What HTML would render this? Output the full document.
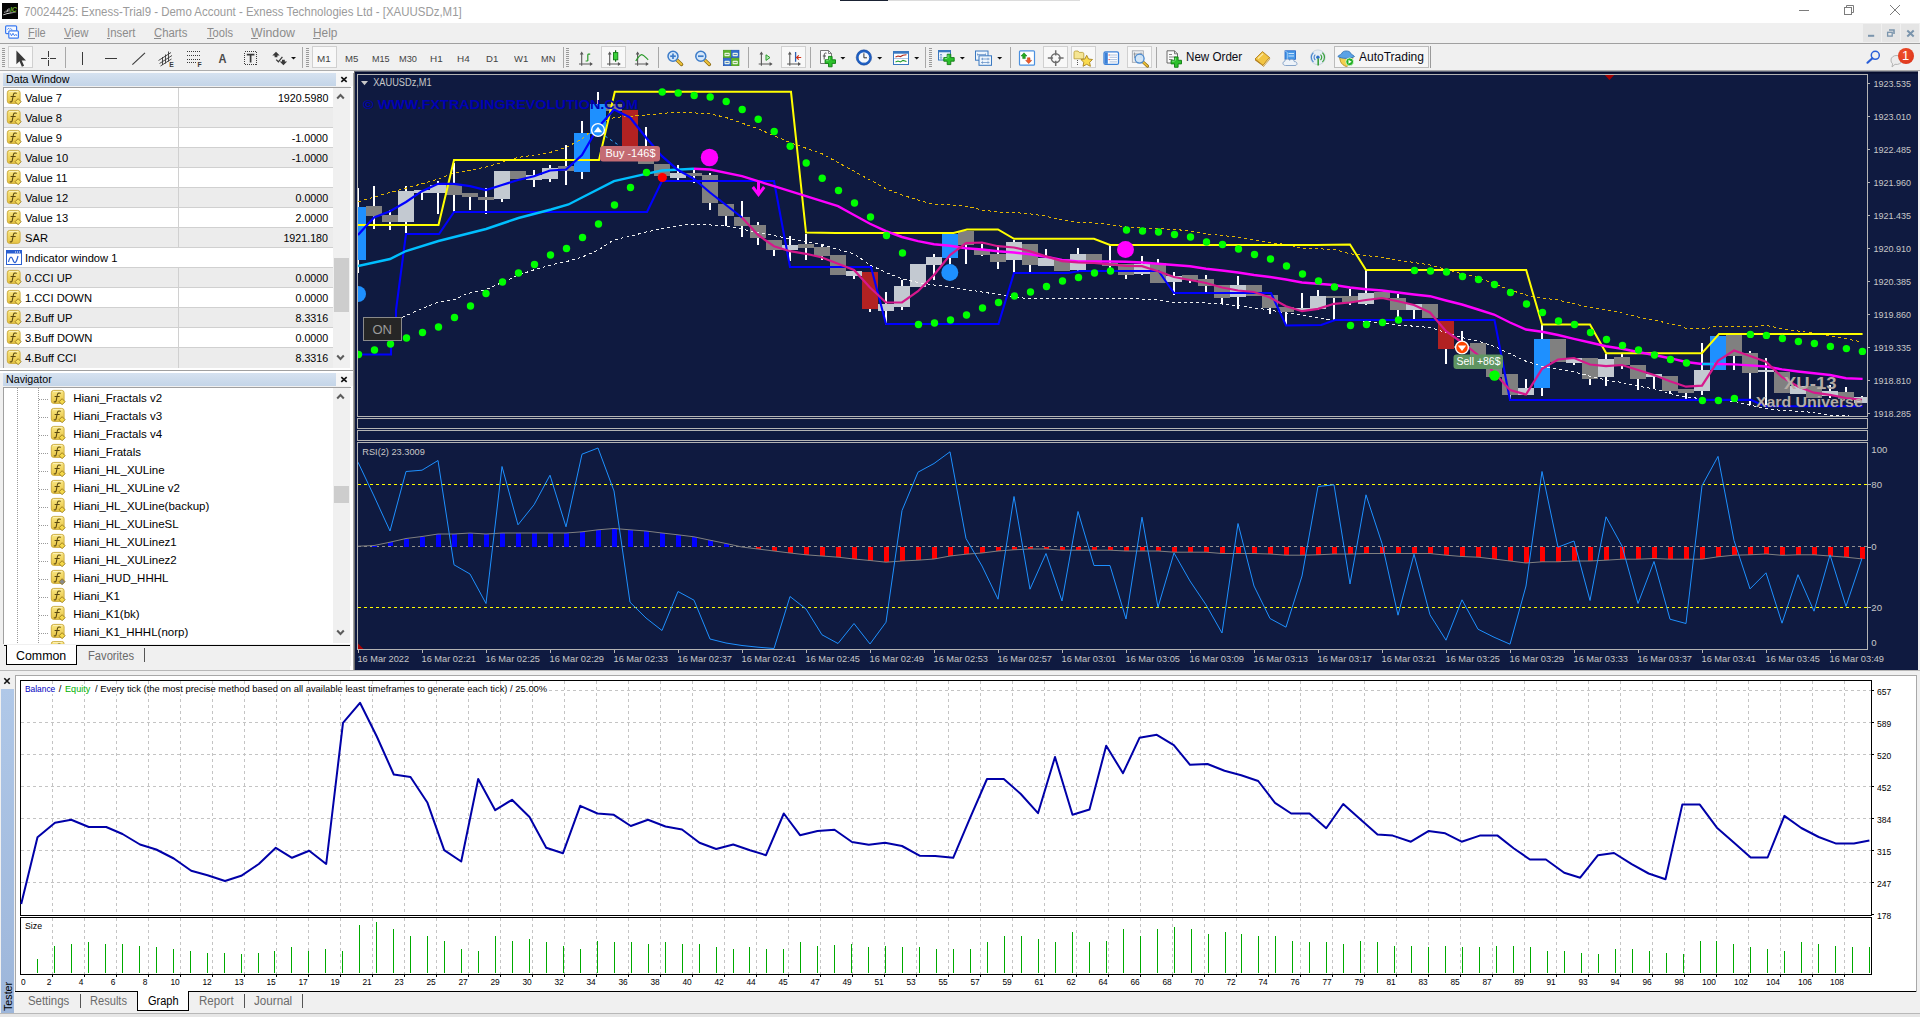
<!DOCTYPE html>
<html><head><meta charset="utf-8"><title>MetaTrader 4</title>
<style>
html,body{margin:0;padding:0;background:#f0f0f0;overflow:hidden}
body{width:1920px;height:1017px;position:relative;font-family:"Liberation Sans",sans-serif;font-size:12px}
#root{position:absolute;left:0;top:0;width:1920px;height:1017px;overflow:hidden;background:#f0f0f0}
svg{overflow:hidden;display:block}
</style></head><body><div id="root">
<div style="position:absolute;left:0px;top:0px;width:1920px;height:23px;background:#ffffff;"></div>
<div style="position:absolute;left:840px;top:0px;width:48px;height:1px;background:#1a2233;"></div>
<div style="position:absolute;left:888px;top:0px;width:192px;height:1px;background:#dcdcdc;"></div>
<svg style="position:absolute;left:2px;top:3px" width="16" height="16" viewBox="0 0 16 16"><rect width="16" height="16" fill="#050505"/><path d="M1.200 11.600C5 9.600 10 9.200 14.900 9.700C10 10 5.500 10.600 1.200 12.300Z" fill="#f2f2f2"/><path d="M2.800 9.800v-1.200M4.200 9.300v-1.800M5.600 8.900v-2.600M7 8.600v-3.400" stroke="#d8d8d8" stroke-width=".9"/><text x="7.900" y="8.600" font-family="Liberation Sans,sans-serif" font-size="6.600" font-weight="bold" font-style="italic" fill="#6fae2e" textLength="7" lengthAdjust="spacingAndGlyphs">IC</text></svg>
<div style="position:absolute;top:3.8px;height:17px;line-height:17px;font-size:12px;color:#9b9b9b;white-space:pre;left:24.0px;transform-origin:0 50%;transform:scaleX(0.9552);">70024425: Exness-Trial9 - Demo Account - Exness Technologies Ltd - [XAUUSDz,M1]</div>
<svg style="position:absolute;left:1780px;top:0" width="140" height="23" viewBox="1780 0 140 23" fill="none" stroke="#7c7c7c" stroke-width="1"><path d="M1799 10.500H1809"/><rect x="1844.500" y="7.500" width="7" height="7"/><path d="M1846.500 7.500V5.500H1853.500V12.500H1851.500"/><path d="M1890 5L1900 15M1900 5L1890 15"/></svg>
<div style="position:absolute;left:0px;top:23px;width:1920px;height:21px;background:#f0f0f0;"></div>
<div style="position:absolute;left:0px;top:43px;width:1920px;height:1px;background:#a0a0a0;"></div>
<svg style="position:absolute;left:4px;top:24px" width="16" height="16" viewBox="4 24 16 16" fill="none" stroke="#3a7af0" stroke-width="1.200"><rect x="5.600" y="25.800" width="11" height="7.800" rx="1" fill="#f4f8ff"/><path d="M7.500 29.500L8.600 28.300L9.800 29.500M10.500 28.300L12 29.800" stroke-width="1"/><rect x="8.800" y="30.800" width="9.600" height="7.400" rx="1" fill="#ffffff"/><path d="M10.300 33.300L11.500 35.800L13 33.300L14.500 35.800L16 34.300L16.800 35.800" stroke-width="1"/></svg>
<div style="position:absolute;top:23.5px;height:18px;line-height:18px;font-size:12.5px;color:#8c8c8c;white-space:pre;left:28.3px;transform-origin:0 50%;transform:scaleX(0.8787);">File</div>
<div style="position:absolute;left:28px;top:38px;width:7px;height:1px;background:#8c8c8c;"></div>
<div style="position:absolute;top:23.5px;height:18px;line-height:18px;font-size:12.5px;color:#8c8c8c;white-space:pre;left:64.3px;transform-origin:0 50%;transform:scaleX(0.9081);">View</div>
<div style="position:absolute;left:64px;top:38px;width:7px;height:1px;background:#8c8c8c;"></div>
<div style="position:absolute;top:23.5px;height:18px;line-height:18px;font-size:12.5px;color:#8c8c8c;white-space:pre;left:107.3px;transform-origin:0 50%;transform:scaleX(0.9084);">Insert</div>
<div style="position:absolute;left:107px;top:38px;width:3px;height:1px;background:#8c8c8c;"></div>
<div style="position:absolute;top:23.5px;height:18px;line-height:18px;font-size:12.5px;color:#8c8c8c;white-space:pre;left:154.3px;transform-origin:0 50%;transform:scaleX(0.9072);">Charts</div>
<div style="position:absolute;left:154px;top:38px;width:7px;height:1px;background:#8c8c8c;"></div>
<div style="position:absolute;top:23.5px;height:18px;line-height:18px;font-size:12.5px;color:#8c8c8c;white-space:pre;left:206.7px;transform-origin:0 50%;transform:scaleX(0.8910);">Tools</div>
<div style="position:absolute;left:207px;top:38px;width:7px;height:1px;background:#8c8c8c;"></div>
<div style="position:absolute;top:23.5px;height:18px;line-height:18px;font-size:12.5px;color:#8c8c8c;white-space:pre;left:251.0px;transform-origin:0 50%;transform:scaleX(0.9897);">Window</div>
<div style="position:absolute;left:251px;top:38px;width:7px;height:1px;background:#8c8c8c;"></div>
<div style="position:absolute;top:23.5px;height:18px;line-height:18px;font-size:12.5px;color:#8c8c8c;white-space:pre;left:313.3px;transform-origin:0 50%;transform:scaleX(0.9491);">Help</div>
<div style="position:absolute;left:313px;top:38px;width:7px;height:1px;background:#8c8c8c;"></div>
<div style="position:absolute;left:1863px;top:24px;width:18px;height:18px;background:#e5e5e5;"></div>
<div style="position:absolute;left:1882px;top:24px;width:18px;height:18px;background:#e5e5e5;"></div>
<div style="position:absolute;left:1901px;top:24px;width:18px;height:18px;background:#e5e5e5;"></div>
<svg style="position:absolute;left:1860px;top:23px" width="60" height="20" viewBox="1860 23 60 20" fill="none" stroke="#7a94ac"><path d="M1868 35.800H1874.200" stroke-width="2"/><path d="M1889 30H1894V34" stroke-width="1.600"/><rect x="1887.600" y="32.300" width="4.600" height="3.800" stroke-width="1.300"/><path d="M1907.300 30.600L1913.700 36.600M1913.700 30.600L1907.300 36.600" stroke-width="2"/></svg>
<div style="position:absolute;left:0px;top:44px;width:1920px;height:27px;background:#f0f0f0;"></div>
<div style="position:absolute;left:0px;top:70px;width:1920px;height:1px;background:#adadad;"></div>
<div style="position:absolute;left:0px;top:71px;width:1920px;height:1px;background:#f8f8f8;"></div>
<div style="position:absolute;left:2px;top:48px;width:3px;height:20px;background:repeating-linear-gradient(#9a9a9a 0 1px,transparent 1px 2px)"></div>
<div style="position:absolute;left:8px;top:46px;width:25px;height:22px;background:#f8f8f8;border:1px solid #d0d0d0;box-sizing:border-box;"></div>
<div style="position:absolute;left:65px;top:47px;width:1px;height:21px;background:#a8a8a8;"></div>
<div style="position:absolute;left:302px;top:47px;width:1px;height:21px;background:#a8a8a8;"></div>
<div style="position:absolute;left:306px;top:48px;width:3px;height:20px;background:repeating-linear-gradient(#9a9a9a 0 1px,transparent 1px 2px)"></div>
<div style="position:absolute;left:312px;top:46px;width:25px;height:22px;background:#f8f8f8;border:1px solid #d0d0d0;box-sizing:border-box;"></div>
<div style="position:absolute;top:52.0px;height:13px;line-height:13px;font-size:9.6px;color:#444444;white-space:pre;left:317.3px;transform-origin:0 50%;transform:scaleX(1.0273);">M1</div>
<div style="position:absolute;top:52.0px;height:13px;line-height:13px;font-size:9.6px;color:#444444;white-space:pre;left:345.0px;transform-origin:0 50%;">M5</div>
<div style="position:absolute;top:52.0px;height:13px;line-height:13px;font-size:9.6px;color:#444444;white-space:pre;left:371.7px;transform-origin:0 50%;transform:scaleX(0.9425);">M15</div>
<div style="position:absolute;top:52.0px;height:13px;line-height:13px;font-size:9.6px;color:#444444;white-space:pre;left:399.3px;transform-origin:0 50%;transform:scaleX(0.9639);">M30</div>
<div style="position:absolute;top:52.0px;height:13px;line-height:13px;font-size:9.6px;color:#444444;white-space:pre;left:430.0px;transform-origin:0 50%;transform:scaleX(1.0349);">H1</div>
<div style="position:absolute;top:52.0px;height:13px;line-height:13px;font-size:9.6px;color:#444444;white-space:pre;left:457.3px;transform-origin:0 50%;transform:scaleX(1.0349);">H4</div>
<div style="position:absolute;top:52.0px;height:13px;line-height:13px;font-size:9.6px;color:#444444;white-space:pre;left:486.0px;transform-origin:0 50%;">D1</div>
<div style="position:absolute;top:52.0px;height:13px;line-height:13px;font-size:9.6px;color:#444444;white-space:pre;left:514.0px;transform-origin:0 50%;transform:scaleX(0.9931);">W1</div>
<div style="position:absolute;top:52.0px;height:13px;line-height:13px;font-size:9.6px;color:#444444;white-space:pre;left:540.7px;transform-origin:0 50%;transform:scaleX(0.9578);">MN</div>
<div style="position:absolute;left:563px;top:47px;width:1px;height:21px;background:#a8a8a8;"></div>
<div style="position:absolute;left:566px;top:48px;width:3px;height:20px;background:repeating-linear-gradient(#9a9a9a 0 1px,transparent 1px 2px)"></div>
<div style="position:absolute;left:601px;top:46px;width:25px;height:22px;background:#f8f8f8;border:1px solid #d0d0d0;box-sizing:border-box;"></div>
<div style="position:absolute;left:658px;top:47px;width:1px;height:21px;background:#a8a8a8;"></div>
<div style="position:absolute;left:748px;top:47px;width:1px;height:21px;background:#a8a8a8;"></div>
<div style="position:absolute;left:781px;top:46px;width:25px;height:22px;background:#f8f8f8;border:1px solid #d0d0d0;box-sizing:border-box;"></div>
<div style="position:absolute;left:810px;top:47px;width:1px;height:21px;background:#a8a8a8;"></div>
<div style="position:absolute;left:925px;top:47px;width:1px;height:21px;background:#a8a8a8;"></div>
<div style="position:absolute;left:929px;top:48px;width:3px;height:20px;background:repeating-linear-gradient(#9a9a9a 0 1px,transparent 1px 2px)"></div>
<div style="position:absolute;left:1010px;top:47px;width:1px;height:21px;background:#a8a8a8;"></div>
<div style="position:absolute;left:1043px;top:46px;width:25px;height:22px;background:#f8f8f8;border:1px solid #d0d0d0;box-sizing:border-box;"></div>
<div style="position:absolute;left:1071px;top:46px;width:25px;height:22px;background:#f8f8f8;border:1px solid #d0d0d0;box-sizing:border-box;"></div>
<div style="position:absolute;left:1127px;top:46px;width:25px;height:22px;background:#f8f8f8;border:1px solid #d0d0d0;box-sizing:border-box;"></div>
<div style="position:absolute;left:1156px;top:47px;width:1px;height:21px;background:#a8a8a8;"></div>
<div style="position:absolute;top:49.2px;height:17px;line-height:17px;font-size:12.3px;color:#0a0a14;white-space:pre;left:1185.6px;transform-origin:0 50%;transform:scaleX(0.9451);">New Order</div>
<div style="position:absolute;left:1334px;top:46px;width:95px;height:22px;background:#f6f6f6;border:1px solid #bcbcbc;box-sizing:border-box;"></div>
<div style="position:absolute;left:1430px;top:46px;width:1px;height:22px;background:#9a9a9a;"></div>
<div style="position:absolute;top:49.2px;height:17px;line-height:17px;font-size:12.3px;color:#0a0a14;white-space:pre;left:1358.5px;transform-origin:0 50%;transform:scaleX(0.9767);">AutoTrading</div>
<svg style="position:absolute;left:0;top:44px" width="1920" height="28" viewBox="0 44 1920 28">
<path d="M16.400 50.600V64.300L19.500 61.300L21.900 66.700L24.100 65.700L21.700 60.400H26Z" fill="#3a3a3a"/>
<g shape-rendering="crispEdges" stroke="#3a3a3a" stroke-width="1" fill="none"><path d="M48.500 51V57M48.500 60V66M41 58.500H47M50 58.500H56M48.500 58V59"/><path d="M82.500 52V65"/><path d="M105 58.500H117"/></g>
<path d="M132.400 64.700L145 52.900" stroke="#3a3a3a" stroke-width="1.100"/>
<g stroke="#3a3a3a" stroke-width=".9" fill="none"><path d="M158.500 60.500L171 52.500M159.500 63.500L172 55.500M160.500 66L171.500 59M162.500 57V65M165.500 54.500V63.500M168.500 51.500V61.500"/></g><text x="169.300" y="66.700" font-family="Liberation Sans,sans-serif" font-size="6.800" font-weight="bold" fill="#3a3a3a">E</text>
<g shape-rendering="crispEdges" stroke="#3a3a3a" stroke-width="1" stroke-dasharray="1 1" fill="none"><path d="M187 51.500H201M187 55.500H201M187 59.500H201M187 62.500H196"/></g><text x="197.600" y="66.700" font-family="Liberation Sans,sans-serif" font-size="6.800" font-weight="bold" fill="#3a3a3a">F</text>
<text x="218.600" y="63" font-family="Liberation Sans,sans-serif" font-size="12.500" font-weight="bold" fill="#4a4a4a" textLength="8" lengthAdjust="spacingAndGlyphs">A</text>
<rect x="244.500" y="51.500" width="12" height="13" fill="none" stroke="#3a3a3a" stroke-dasharray="1 1" shape-rendering="crispEdges"/><path d="M246.800 54.700H254.400M250.600 54.700V62.500" stroke="#3a3a3a" stroke-width="1.700" fill="none"/>
<path d="M272.300 55.600L276 51.800L279.700 55.600H277.400V57.200H274.600V55.600Z M279.700 61.400L283.400 65.200L287.100 61.400H284.800V59.800H282V61.400Z" fill="#3a3a3a"/><path d="M276.200 59.600L278.400 61.800L282.400 56.800" stroke="#3a3a3a" stroke-width="1.300" fill="none"/>
<path d="M291.0 57h5l-2.500 2.600z" fill="#111"/>
<path d="M581.7 53.0V65.7M579.0 64.0H591.5" stroke="#585858" stroke-width="1.1" fill="none"/><path d="M579.8 54.6L581.7 51.6L583.6 54.6Z M589.9 62.1L592.9 64.0L589.9 65.9Z" fill="#585858"/>
<path d="M587.8 54.2V61M587.8 54.2H590.2M585.6 61H587.8" stroke="#2a9a2a" stroke-width="1.2" fill="none"/>
<path d="M609.7 53.0V65.7M607.0 64.0H619.5" stroke="#585858" stroke-width="1.1" fill="none"/><path d="M607.8 54.6L609.7 51.6L611.6 54.6Z M617.9 62.1L620.9 64.0L617.9 65.9Z" fill="#585858"/>
<path d="M615.6 50.2V61.8" stroke="#0e6a12" stroke-width="1.2"/><rect x="613.5" y="52.6" width="4.3" height="7.2" fill="#3ad03a" stroke="#0e7a12" stroke-width=".9"/>
<path d="M637.6 53.0V65.7M634.9 64.0H647.4" stroke="#585858" stroke-width="1.1" fill="none"/><path d="M635.7 54.6L637.6 51.6L639.5 54.6Z M645.8 62.1L648.8 64.0L645.8 65.9Z" fill="#585858"/>
<path d="M635.8 61C638 57.500 640 54.500 641.800 54.700C644 55 646 58 648.200 59.700" stroke="#2a9a2a" stroke-width="1.2" fill="none"/>
<path d="M676.4 59.6L681.6 64.4" stroke="#8a6a10" stroke-width="3.4" stroke-linecap="round"/><path d="M676.6 59.8L681.4 64.2" stroke="#eec23a" stroke-width="2" stroke-linecap="round"/><circle cx="673" cy="56.2" r="5" fill="#d6e8fa" stroke="#3d7cc9" stroke-width="1.5"/><path d="M670.2 56.2H675.8" stroke="#3d7cc9" stroke-width="1.7"/><path d="M673 53.4V59.0" stroke="#3d7cc9" stroke-width="1.7"/>
<path d="M704.2 59.6L709.4 64.4" stroke="#8a6a10" stroke-width="3.4" stroke-linecap="round"/><path d="M704.4 59.8L709.2 64.2" stroke="#eec23a" stroke-width="2" stroke-linecap="round"/><circle cx="700.8" cy="56.2" r="5" fill="#d6e8fa" stroke="#3d7cc9" stroke-width="1.5"/><path d="M698.0 56.2H703.6" stroke="#3d7cc9" stroke-width="1.7"/>
<rect x="723.3" y="50.2" width="7.6" height="7.5" fill="#5ab42a" stroke="#3f9416" stroke-width=".6"/><rect x="724.5" y="52.8" width="5.2" height="3.4" rx=".8" fill="#e8f2e0"/><path d="M725.5 54.5h3.2" stroke="#3f9416" stroke-width=".7"/>
<rect x="731.4" y="50.2" width="7.6" height="7.5" fill="#2f6fd0" stroke="#1c4ca8" stroke-width=".6"/><rect x="732.6" y="52.8" width="5.2" height="3.4" rx=".8" fill="#e8f2e0"/><path d="M733.6 54.5h3.2" stroke="#1c4ca8" stroke-width=".7"/>
<rect x="723.3" y="58.2" width="7.6" height="7.5" fill="#2f6fd0" stroke="#1c4ca8" stroke-width=".6"/><rect x="724.5" y="60.8" width="5.2" height="3.4" rx=".8" fill="#e8f2e0"/><path d="M725.5 62.5h3.2" stroke="#1c4ca8" stroke-width=".7"/>
<rect x="731.4" y="58.2" width="7.6" height="7.5" fill="#5ab42a" stroke="#3f9416" stroke-width=".6"/><rect x="732.6" y="60.8" width="5.2" height="3.4" rx=".8" fill="#e8f2e0"/><path d="M733.6 62.5h3.2" stroke="#3f9416" stroke-width=".7"/>
<path d="M761.4 53.0V65.7M758.7 64.0H771.2" stroke="#585858" stroke-width="1.1" fill="none"/><path d="M759.5 54.6L761.4 51.6L763.3 54.6Z M769.6 62.1L772.6 64.0L769.6 65.9Z" fill="#585858"/>
<path d="M766 54.800L770 57.600L766 60.400Z" fill="#b8ecb8" stroke="#2a9a2a" stroke-width="1"/>
<path d="M789.8 53.0V65.7M787.1 64.0H799.6" stroke="#585858" stroke-width="1.1" fill="none"/><path d="M787.9 54.6L789.8 51.6L791.7 54.6Z M798.0 62.1L801.0 64.0L798.0 65.9Z" fill="#585858"/>
<path d="M795.600 52V61.800" stroke="#2c5fb0" stroke-width="1.3"/><path d="M801.200 57.500H796.800M798.800 55.400L796.600 57.500L798.800 59.600" stroke="#d03018" stroke-width="1.2" fill="none"/>
<path d="M820.500 50.500H828.500L831.500 53.500V63.500H820.500Z" fill="#fafafa" stroke="#6a6a6a" stroke-width=".9"/><path d="M828.500 50.500V53.500H831.500" fill="none" stroke="#6a6a6a" stroke-width=".8"/><path d="M826.500 53.200C824.800 52.600 824.300 53.600 824.200 55V59.500M822.800 56H826" stroke="#444" stroke-width=".9" fill="none"/>
<path d="M828.5 56.4H832.1V59.8H835.5V63.4H832.1V66.8H828.5V63.4H825.1V59.8H828.5Z" fill="#2cc02c" stroke="#0e7a12" stroke-width=".9" stroke-linejoin="round"/><path d="M829.3 57.4V60.1M826.1 60.7H828.5" stroke="#8be88b" stroke-width=".9" fill="none"/>
<path d="M840.4 57h5l-2.500 2.600z" fill="#111"/>
<circle cx="863.9" cy="57.5" r="6.5" fill="#f4f8fc" stroke="#1c5ec4" stroke-width="2.4"/><circle cx="863.9" cy="57.5" r="7.7" fill="none" stroke="#123f8c" stroke-width=".5"/><path d="M863.900 53.300V57.800H867" stroke="#333" stroke-width="1" fill="none"/><path d="M863.900 51.600v1M863.900 62.400v1M858 57.500h1M868.800 57.500h1" stroke="#7a8aa0" stroke-width=".8"/>
<path d="M877.2 57h5l-2.500 2.600z" fill="#111"/>
<rect x="893.5" y="51.5" width="15" height="13" fill="#ffffff" stroke="#3a78c0" stroke-width="1"/><rect x="893.500" y="51.500" width="15" height="2.200" fill="#3a78c0"/><path d="M894 58.500H908" stroke="#9ab8dc" stroke-width=".8"/><path d="M895.500 57L898 56L900.500 56.600L903 55.300L906.500 54.800" stroke="#b02818" stroke-width="1.1" fill="none"/><path d="M895.500 62L898 61L900.500 62L903 60.400L906.500 61.600" stroke="#1e9a2a" stroke-width="1.1" fill="none"/>
<path d="M914.2 57h5l-2.500 2.600z" fill="#111"/>
<rect x="938.500" y="50.500" width="12" height="9.500" fill="#eef5fc" stroke="#3a78c0" stroke-width="1"/><rect x="938.500" y="50.500" width="12" height="1.800" fill="#3a78c0"/><path d="M941 54V58.500M940 55.200L941 54L942 55.200M940 57.300L941 58.500L942 57.300" stroke="#5a88c0" stroke-width=".7" fill="none"/>
<path d="M947.2 54.2H950.8V57.6H954.2V61.2H950.8V64.6H947.2V61.2H943.8V57.6H947.2Z" fill="#2cc02c" stroke="#0e7a12" stroke-width=".9" stroke-linejoin="round"/><path d="M948.0 55.2V57.9M944.8 58.5H947.2" stroke="#8be88b" stroke-width=".9" fill="none"/>
<path d="M959.9 57h5l-2.500 2.600z" fill="#111"/>
<rect x="975.500" y="51" width="12.500" height="9.200" fill="#eef5fc" stroke="#3a78c0" stroke-width="1"/><path d="M977.500 54.500H985.500M977.500 53.500V55.500M985.500 53.500V55.500" stroke="#6a94c8" stroke-width=".8" fill="none"/><rect x="979" y="55.800" width="12.500" height="9.500" fill="#eef5fc" stroke="#3a78c0" stroke-width="1"/><path d="M981 59H989.500M981 62.500H989.500M982.500 57.800V60.200M988 57.800V60.200M982.500 61.300V63.700M988 61.300V63.700" stroke="#6a94c8" stroke-width=".8" fill="none"/>
<path d="M997.2 57h5l-2.500 2.600z" fill="#111"/>
<rect x="1019.500" y="50.800" width="15" height="14.400" rx="1" fill="#ffffff" stroke="#4a90e0" stroke-width="1.2"/><path d="M1024 52.800L1027 56H1025.300V58.600H1022.700V56H1021Z" fill="#22aa22" stroke="#0e7a12" stroke-width=".5"/><path d="M1028.700 63.600L1025.700 60.400H1027.400V57.800H1030V60.400H1031.700Z" fill="#f05a28" stroke="#b03010" stroke-width=".5"/>
<circle cx="1055.7" cy="58.1" r="4.4" fill="none" stroke="#6e6e6e" stroke-width="1.5"/><path d="M1055.700 50.200V55.500M1055.700 60.700V66M1047.800 58.100H1053.100M1058.300 58.100H1063.600" stroke="#6e6e6e" stroke-width="1.5"/>
<path d="M1074 52.500C1074 51.600 1074.600 51 1075.500 51H1078L1079.200 52.400H1082.500C1083.300 52.400 1083.800 53 1083.800 53.800V58.800H1074Z" fill="#f5e594" stroke="#b89a30" stroke-width=".8"/><path d="M1077.500 60V66" stroke="#555" stroke-width="1" stroke-dasharray="1 1"/>
<path d="M1086.700 55.300L1088.500 59L1092.500 59.500L1089.600 62.300L1090.400 66.300L1086.700 64.300L1083 66.300L1083.800 62.300L1080.900 59.500L1084.900 59Z" fill="#fadb4e" stroke="#a8821a" stroke-width=".9" stroke-linejoin="round"/>
<rect x="1104" y="51.800" width="14.500" height="12.600" rx="1.500" fill="#ffffff" stroke="#3a80d8" stroke-width="1.300"/><rect x="1104.600" y="52.400" width="3.200" height="11.400" fill="#3a80d8"/><path d="M1109.500 55H1117M1109.500 57.300H1117M1109.500 59.600H1117M1109.500 61.900H1117" stroke="#8aa6d0" stroke-width=".7"/><path d="M1108.600 55h1M1108.600 59.600h1" stroke="#e02020" stroke-width="1"/>
<rect x="1132.300" y="50.800" width="11" height="11.500" fill="#eceef0" stroke="#9aa0a8" stroke-width=".8"/><path d="M1134.500 52.500V58M1141 52.500V58M1133.500 54H1142.500" stroke="#7a8088" stroke-width=".7"/>
<path d="M1143 62L1147.500 66.200" stroke="#8a6a10" stroke-width="3" stroke-linecap="round"/><path d="M1143.200 62.200L1147.300 66" stroke="#eec23a" stroke-width="1.700" stroke-linecap="round"/><circle cx="1139.600" cy="58.600" r="4.500" fill="#cfe4f8" fill-opacity=".85" stroke="#4a8ad0" stroke-width="1.300"/>
<path d="M1167 50.800H1174.500L1177.500 53.800V63H1167Z" fill="#fafafa" stroke="#5a5a5a" stroke-width=".9"/><path d="M1174.500 50.800V53.800H1177.500" fill="none" stroke="#5a5a5a" stroke-width=".8"/><path d="M1169 54.500H1172M1169 57H1175.500M1169 59.500H1172.500" stroke="#777" stroke-width=".9"/>
<path d="M1174.5 56.9H1178.1V60.3H1181.5V63.9H1178.1V67.3H1174.5V63.9H1171.1V60.3H1174.5Z" fill="#2cc02c" stroke="#0e7a12" stroke-width=".9" stroke-linejoin="round"/><path d="M1175.3 57.9V60.6M1172.1 61.2H1174.5" stroke="#8be88b" stroke-width=".9" fill="none"/>
<path d="M1255 59L1262.500 51.600L1269.500 57.500L1263 65.400Z" fill="#f2c544" stroke="#a87410" stroke-width=".8" stroke-linejoin="round"/><path d="M1255 59L1263 65.400L1263.600 66.600L1255.200 60.600Z" fill="#b07810"/><path d="M1263 65.400L1269.500 57.500L1269.800 59L1263.600 66.600Z" fill="#f7e3a8" stroke="#a87410" stroke-width=".5"/><path d="M1258 58.500L1263 53.800" stroke="#fbe9a8" stroke-width="1.200"/>
<rect x="1285" y="50.800" width="10.500" height="8.500" fill="#4a9ae8" stroke="#1c5ec4" stroke-width=".8"/><path d="M1288.500 53.500H1294M1288.500 56H1294" stroke="#d8ecff" stroke-width=".9"/><path d="M1285 51L1287.500 52.500V59" stroke="#9cc8f4" stroke-width=".8" fill="none"/><path d="M1285.500 65.500C1282.500 65.500 1282 61.800 1284.800 61.200C1285 58.800 1288.500 58.300 1289.500 60.300C1291 58.600 1294.200 59.300 1294.300 61.600C1297.400 61.200 1298 65.500 1295 65.500Z" fill="#eef3f9" stroke="#7c9cc4" stroke-width=".9"/>
<circle cx="1317.900" cy="57.300" r="7.400" fill="#e6eef4" stroke="#b4c4d0" stroke-width=".6"/><path d="M1313.400 62A6.400 6.400 0 0 1 1313.400 52.600M1315.300 60A3.600 3.600 0 0 1 1315.300 54.600" stroke="#4a88d0" stroke-width="1.200" fill="none"/><path d="M1322.400 52.600A6.400 6.400 0 0 1 1322.400 62M1320.500 54.600A3.600 3.600 0 0 1 1320.500 60" stroke="#3aa03a" stroke-width="1.200" fill="none"/><circle cx="1317.900" cy="57.300" r="1.700" fill="#2c6fc8"/><path d="M1318.200 58.500V65.500" stroke="#3aa03a" stroke-width="1.600"/>
<path d="M1339.500 57.500H1353L1351.500 62.500C1350 65 1347.500 66.200 1346.200 66.500C1344 65.800 1341.500 64 1340.500 61.500Z" fill="#f2cf4e" stroke="#a88418" stroke-width=".8"/><path d="M1337.800 56.500C1339.500 54.500 1341.500 54.800 1342 53C1342.800 50.300 1349.800 50.300 1350.500 53C1351 54.800 1353.200 54.500 1354.500 56.500C1351 59 1341.500 59 1337.800 56.500Z" fill="#5aa2e6" stroke="#2c6fb3" stroke-width=".8"/><circle cx="1349.700" cy="61.800" r="3.900" fill="#22b022" stroke="#eaffea" stroke-width=".8"/><path d="M1348.500 59.800L1351.700 61.800L1348.500 63.800Z" fill="#fff"/>
</svg>
<svg style="position:absolute;left:1862.5px;top:48.0px" width="20" height="20" viewBox="0 0 20 20"><circle cx="12.3" cy="7.3" r="4" fill="none" stroke="#2a5fd8" stroke-width="1.5"/><path d="M9.4 10.2L4.5 14.7" stroke="#2a5fd8" stroke-width="2.2" stroke-linecap="round"/></svg>
<svg style="position:absolute;left:1889.0px;top:51.0px" width="20" height="20" viewBox="0 0 20 20"><path d="M2 9a5.5 4.5 0 1 1 4 4.3L3 16l.6-3.2A4.4 4.4 0 0 1 2 9z" fill="#ececec" stroke="#b4b4b4"/></svg>
<div style="position:absolute;left:1897.5px;top:47.5px;width:16px;height:16px;border-radius:8px;background:radial-gradient(circle at 40% 35%,#f0502a,#d8301a);color:#fff;font-size:13px;line-height:16px;text-align:center;">1</div>
<svg width="0" height="0" style="position:absolute"><defs><linearGradient id="fg" x1="0" y1="0" x2="0" y2="1"><stop offset="0" stop-color="#f9e681"/><stop offset="1" stop-color="#e6c341"/></linearGradient></defs></svg>
<div style="position:absolute;left:0px;top:71px;width:356px;height:600px;background:#f0f0f0;"></div>
<div style="position:absolute;left:350px;top:71px;width:3px;height:599px;background:#ffffff;"></div>
<div style="position:absolute;left:353px;top:71px;width:1px;height:599px;background:#a2a2a2;"></div>
<div style="position:absolute;left:354px;top:71px;width:1px;height:599px;background:#6e6e6e;"></div>
<div style="position:absolute;left:0px;top:71px;width:354px;height:2px;background:#fafafa;"></div>
<div style="position:absolute;left:3px;top:73px;width:333px;height:13px;background:linear-gradient(#d6e2f0,#c4d5e8);"></div>
<div style="position:absolute;left:336px;top:73px;width:17px;height:13px;background:#f6f6f6;"></div>
<div style="position:absolute;top:71.0px;height:16px;line-height:16px;font-size:11.5px;color:#000;white-space:pre;left:5.5px;transform-origin:0 50%;transform:scaleX(0.9287);">Data Window</div>
<svg style="position:absolute;left:340px;top:76px" width="8" height="7" viewBox="0 0 8 7"><path d="M1.300 1.200L6.700 5.800M6.700 1.200L1.300 5.800" stroke="#111" stroke-width="1.700"/></svg>
<div style="position:absolute;left:0px;top:368px;width:353px;height:5px;background:#ffffff;"></div>
<div style="position:absolute;left:0px;top:370px;width:353px;height:1px;background:#a0a0a0;"></div>
<div style="position:absolute;left:3px;top:87px;width:348px;height:281px;background:#ffffff;border:1px solid #a0a0a0;border-right:none;border-bottom:none;box-sizing:border-box;"></div>
<div style="position:absolute;left:4px;top:88px;width:329px;height:20px;background:#ffffff;"></div>
<div style="position:absolute;left:4px;top:107px;width:329px;height:1px;background:#d0d0d0;"></div>
<div style="position:absolute;left:178px;top:88px;width:1px;height:20px;background:#d0d0d0;"></div>
<svg style="position:absolute;left:6px;top:90px;overflow:visible" width="16" height="16" viewBox="0 0 16 16"><rect x="1.3" y=".4" width="12.8" height="13" rx="2.4" fill="url(#fg)" stroke="#c9a83a" stroke-width=".9"/><path d="M3 1.600h9.400" stroke="#fdf3c0" stroke-width=".9"/><path d="M10.300 3.300c-1.900-.9-2.700.1-3 1.900L6.200 10.600c-.3 1.300-1 1.700-2 1.200M5 6.400h4.300" stroke="#5a4810" stroke-width="1.050" fill="none" stroke-linecap="round"/><path d="M12.100 8.700l3 3-3 3-3-3z" fill="#f7df62" stroke="#8a6c14" stroke-width=".8"/></svg>
<div style="position:absolute;top:90.0px;height:16px;line-height:16px;font-size:11.5px;color:#000;white-space:pre;left:24.5px;transform-origin:0 50%;transform:scaleX(0.9704);">Value 7</div>
<div style="position:absolute;top:90.0px;height:16px;line-height:16px;font-size:11.5px;color:#000;white-space:pre;right:1592.0px;transform-origin:100% 50%;transform:scaleX(0.9287);">1920.5980</div>
<div style="position:absolute;left:4px;top:108px;width:329px;height:20px;background:#ececec;"></div>
<div style="position:absolute;left:4px;top:127px;width:329px;height:1px;background:#d0d0d0;"></div>
<div style="position:absolute;left:178px;top:108px;width:1px;height:20px;background:#d0d0d0;"></div>
<svg style="position:absolute;left:6px;top:110px;overflow:visible" width="16" height="16" viewBox="0 0 16 16"><rect x="1.3" y=".4" width="12.8" height="13" rx="2.4" fill="url(#fg)" stroke="#c9a83a" stroke-width=".9"/><path d="M3 1.600h9.400" stroke="#fdf3c0" stroke-width=".9"/><path d="M10.300 3.300c-1.900-.9-2.700.1-3 1.900L6.200 10.600c-.3 1.300-1 1.700-2 1.200M5 6.400h4.300" stroke="#5a4810" stroke-width="1.050" fill="none" stroke-linecap="round"/><path d="M12.100 8.700l3 3-3 3-3-3z" fill="#f7df62" stroke="#8a6c14" stroke-width=".8"/></svg>
<div style="position:absolute;top:110.0px;height:16px;line-height:16px;font-size:11.5px;color:#000;white-space:pre;left:24.5px;transform-origin:0 50%;transform:scaleX(0.9704);">Value 8</div>
<div style="position:absolute;left:4px;top:128px;width:329px;height:20px;background:#ffffff;"></div>
<div style="position:absolute;left:4px;top:147px;width:329px;height:1px;background:#d0d0d0;"></div>
<div style="position:absolute;left:178px;top:128px;width:1px;height:20px;background:#d0d0d0;"></div>
<svg style="position:absolute;left:6px;top:130px;overflow:visible" width="16" height="16" viewBox="0 0 16 16"><rect x="1.3" y=".4" width="12.8" height="13" rx="2.4" fill="url(#fg)" stroke="#c9a83a" stroke-width=".9"/><path d="M3 1.600h9.400" stroke="#fdf3c0" stroke-width=".9"/><path d="M10.300 3.300c-1.900-.9-2.700.1-3 1.900L6.200 10.600c-.3 1.300-1 1.700-2 1.200M5 6.400h4.300" stroke="#5a4810" stroke-width="1.050" fill="none" stroke-linecap="round"/><path d="M12.100 8.700l3 3-3 3-3-3z" fill="#f7df62" stroke="#8a6c14" stroke-width=".8"/></svg>
<div style="position:absolute;top:130.0px;height:16px;line-height:16px;font-size:11.5px;color:#000;white-space:pre;left:24.5px;transform-origin:0 50%;transform:scaleX(0.9704);">Value 9</div>
<div style="position:absolute;top:130.0px;height:16px;line-height:16px;font-size:11.5px;color:#000;white-space:pre;right:1592.0px;transform-origin:100% 50%;transform:scaleX(0.9287);">-1.0000</div>
<div style="position:absolute;left:4px;top:148px;width:329px;height:20px;background:#ececec;"></div>
<div style="position:absolute;left:4px;top:167px;width:329px;height:1px;background:#d0d0d0;"></div>
<div style="position:absolute;left:178px;top:148px;width:1px;height:20px;background:#d0d0d0;"></div>
<svg style="position:absolute;left:6px;top:150px;overflow:visible" width="16" height="16" viewBox="0 0 16 16"><rect x="1.3" y=".4" width="12.8" height="13" rx="2.4" fill="url(#fg)" stroke="#c9a83a" stroke-width=".9"/><path d="M3 1.600h9.400" stroke="#fdf3c0" stroke-width=".9"/><path d="M10.300 3.300c-1.900-.9-2.700.1-3 1.900L6.200 10.600c-.3 1.300-1 1.700-2 1.200M5 6.400h4.300" stroke="#5a4810" stroke-width="1.050" fill="none" stroke-linecap="round"/><path d="M12.100 8.700l3 3-3 3-3-3z" fill="#f7df62" stroke="#8a6c14" stroke-width=".8"/></svg>
<div style="position:absolute;top:150.0px;height:16px;line-height:16px;font-size:11.5px;color:#000;white-space:pre;left:24.5px;transform-origin:0 50%;transform:scaleX(0.9705);">Value 10</div>
<div style="position:absolute;top:150.0px;height:16px;line-height:16px;font-size:11.5px;color:#000;white-space:pre;right:1592.0px;transform-origin:100% 50%;transform:scaleX(0.9287);">-1.0000</div>
<div style="position:absolute;left:4px;top:168px;width:329px;height:20px;background:#ffffff;"></div>
<div style="position:absolute;left:4px;top:187px;width:329px;height:1px;background:#d0d0d0;"></div>
<div style="position:absolute;left:178px;top:168px;width:1px;height:20px;background:#d0d0d0;"></div>
<svg style="position:absolute;left:6px;top:170px;overflow:visible" width="16" height="16" viewBox="0 0 16 16"><rect x="1.3" y=".4" width="12.8" height="13" rx="2.4" fill="url(#fg)" stroke="#c9a83a" stroke-width=".9"/><path d="M3 1.600h9.400" stroke="#fdf3c0" stroke-width=".9"/><path d="M10.300 3.300c-1.900-.9-2.700.1-3 1.900L6.200 10.600c-.3 1.300-1 1.700-2 1.200M5 6.400h4.300" stroke="#5a4810" stroke-width="1.050" fill="none" stroke-linecap="round"/><path d="M12.100 8.700l3 3-3 3-3-3z" fill="#f7df62" stroke="#8a6c14" stroke-width=".8"/></svg>
<div style="position:absolute;top:170.0px;height:16px;line-height:16px;font-size:11.5px;color:#000;white-space:pre;left:24.5px;transform-origin:0 50%;transform:scaleX(0.9705);">Value 11</div>
<div style="position:absolute;left:4px;top:188px;width:329px;height:20px;background:#ececec;"></div>
<div style="position:absolute;left:4px;top:207px;width:329px;height:1px;background:#d0d0d0;"></div>
<div style="position:absolute;left:178px;top:188px;width:1px;height:20px;background:#d0d0d0;"></div>
<svg style="position:absolute;left:6px;top:190px;overflow:visible" width="16" height="16" viewBox="0 0 16 16"><rect x="1.3" y=".4" width="12.8" height="13" rx="2.4" fill="url(#fg)" stroke="#c9a83a" stroke-width=".9"/><path d="M3 1.600h9.400" stroke="#fdf3c0" stroke-width=".9"/><path d="M10.300 3.300c-1.900-.9-2.700.1-3 1.900L6.200 10.600c-.3 1.300-1 1.700-2 1.200M5 6.400h4.300" stroke="#5a4810" stroke-width="1.050" fill="none" stroke-linecap="round"/><path d="M12.100 8.700l3 3-3 3-3-3z" fill="#f7df62" stroke="#8a6c14" stroke-width=".8"/></svg>
<div style="position:absolute;top:190.0px;height:16px;line-height:16px;font-size:11.5px;color:#000;white-space:pre;left:24.5px;transform-origin:0 50%;transform:scaleX(0.9705);">Value 12</div>
<div style="position:absolute;top:190.0px;height:16px;line-height:16px;font-size:11.5px;color:#000;white-space:pre;right:1592.0px;transform-origin:100% 50%;transform:scaleX(0.9287);">0.0000</div>
<div style="position:absolute;left:4px;top:208px;width:329px;height:20px;background:#ffffff;"></div>
<div style="position:absolute;left:4px;top:227px;width:329px;height:1px;background:#d0d0d0;"></div>
<div style="position:absolute;left:178px;top:208px;width:1px;height:20px;background:#d0d0d0;"></div>
<svg style="position:absolute;left:6px;top:210px;overflow:visible" width="16" height="16" viewBox="0 0 16 16"><rect x="1.3" y=".4" width="12.8" height="13" rx="2.4" fill="url(#fg)" stroke="#c9a83a" stroke-width=".9"/><path d="M3 1.600h9.400" stroke="#fdf3c0" stroke-width=".9"/><path d="M10.300 3.300c-1.900-.9-2.700.1-3 1.900L6.200 10.600c-.3 1.300-1 1.700-2 1.200M5 6.400h4.300" stroke="#5a4810" stroke-width="1.050" fill="none" stroke-linecap="round"/><path d="M12.100 8.700l3 3-3 3-3-3z" fill="#f7df62" stroke="#8a6c14" stroke-width=".8"/></svg>
<div style="position:absolute;top:210.0px;height:16px;line-height:16px;font-size:11.5px;color:#000;white-space:pre;left:24.5px;transform-origin:0 50%;transform:scaleX(0.9705);">Value 13</div>
<div style="position:absolute;top:210.0px;height:16px;line-height:16px;font-size:11.5px;color:#000;white-space:pre;right:1592.0px;transform-origin:100% 50%;transform:scaleX(0.9287);">2.0000</div>
<div style="position:absolute;left:4px;top:228px;width:329px;height:20px;background:#ececec;"></div>
<div style="position:absolute;left:4px;top:247px;width:329px;height:1px;background:#d0d0d0;"></div>
<div style="position:absolute;left:178px;top:228px;width:1px;height:20px;background:#d0d0d0;"></div>
<svg style="position:absolute;left:6px;top:230px;overflow:visible" width="16" height="16" viewBox="0 0 16 16"><rect x="1.3" y=".4" width="12.8" height="13" rx="2.4" fill="url(#fg)" stroke="#c9a83a" stroke-width=".9"/><path d="M3 1.600h9.400" stroke="#fdf3c0" stroke-width=".9"/><path d="M10.300 3.300c-1.900-.9-2.700.1-3 1.900L6.200 10.600c-.3 1.300-1 1.700-2 1.200M5 6.400h4.300" stroke="#5a4810" stroke-width="1.050" fill="none" stroke-linecap="round"/></svg>
<div style="position:absolute;top:230.0px;height:16px;line-height:16px;font-size:11.5px;color:#000;white-space:pre;left:24.5px;transform-origin:0 50%;transform:scaleX(0.9704);">SAR</div>
<div style="position:absolute;top:230.0px;height:16px;line-height:16px;font-size:11.5px;color:#000;white-space:pre;right:1592.0px;transform-origin:100% 50%;transform:scaleX(0.9287);">1921.180</div>
<div style="position:absolute;left:4px;top:248px;width:329px;height:20px;background:#ffffff;"></div>
<div style="position:absolute;left:4px;top:267px;width:329px;height:1px;background:#d0d0d0;"></div>
<svg style="position:absolute;left:6px;top:250px" width="16" height="16" viewBox="0 0 16 16"><rect x=".5" y=".5" width="15" height="14" fill="#fff" stroke="#2a5fd0"/><rect x=".5" y=".5" width="15" height="3" fill="#2a5fd0"/><path d="M9 2h1M11 2h1M13 2h1" stroke="#fff"/><path d="M2.5 12c1.5-6 3-6 4.500-2s3 4 5-4" stroke="#2a5fd0" fill="none" stroke-width="1.2"/></svg>
<div style="position:absolute;top:250.0px;height:16px;line-height:16px;font-size:11.5px;color:#000;white-space:pre;left:24.5px;transform-origin:0 50%;transform:scaleX(0.9704);">Indicator window 1</div>
<div style="position:absolute;left:4px;top:268px;width:329px;height:20px;background:#ececec;"></div>
<div style="position:absolute;left:4px;top:287px;width:329px;height:1px;background:#d0d0d0;"></div>
<div style="position:absolute;left:178px;top:268px;width:1px;height:20px;background:#d0d0d0;"></div>
<svg style="position:absolute;left:6px;top:270px;overflow:visible" width="16" height="16" viewBox="0 0 16 16"><rect x="1.3" y=".4" width="12.8" height="13" rx="2.4" fill="url(#fg)" stroke="#c9a83a" stroke-width=".9"/><path d="M3 1.600h9.400" stroke="#fdf3c0" stroke-width=".9"/><path d="M10.300 3.300c-1.900-.9-2.700.1-3 1.900L6.200 10.600c-.3 1.300-1 1.700-2 1.200M5 6.400h4.300" stroke="#5a4810" stroke-width="1.050" fill="none" stroke-linecap="round"/><path d="M12.100 8.700l3 3-3 3-3-3z" fill="#f7df62" stroke="#8a6c14" stroke-width=".8"/></svg>
<div style="position:absolute;top:270.0px;height:16px;line-height:16px;font-size:11.5px;color:#000;white-space:pre;left:24.5px;transform-origin:0 50%;transform:scaleX(0.9704);">0.CCI UP</div>
<div style="position:absolute;top:270.0px;height:16px;line-height:16px;font-size:11.5px;color:#000;white-space:pre;right:1592.0px;transform-origin:100% 50%;transform:scaleX(0.9287);">0.0000</div>
<div style="position:absolute;left:4px;top:288px;width:329px;height:20px;background:#ffffff;"></div>
<div style="position:absolute;left:4px;top:307px;width:329px;height:1px;background:#d0d0d0;"></div>
<div style="position:absolute;left:178px;top:288px;width:1px;height:20px;background:#d0d0d0;"></div>
<svg style="position:absolute;left:6px;top:290px;overflow:visible" width="16" height="16" viewBox="0 0 16 16"><rect x="1.3" y=".4" width="12.8" height="13" rx="2.4" fill="url(#fg)" stroke="#c9a83a" stroke-width=".9"/><path d="M3 1.600h9.400" stroke="#fdf3c0" stroke-width=".9"/><path d="M10.300 3.300c-1.900-.9-2.700.1-3 1.900L6.200 10.600c-.3 1.300-1 1.700-2 1.200M5 6.400h4.300" stroke="#5a4810" stroke-width="1.050" fill="none" stroke-linecap="round"/><path d="M12.100 8.700l3 3-3 3-3-3z" fill="#f7df62" stroke="#8a6c14" stroke-width=".8"/></svg>
<div style="position:absolute;top:290.0px;height:16px;line-height:16px;font-size:11.5px;color:#000;white-space:pre;left:24.5px;transform-origin:0 50%;transform:scaleX(0.9704);">1.CCI DOWN</div>
<div style="position:absolute;top:290.0px;height:16px;line-height:16px;font-size:11.5px;color:#000;white-space:pre;right:1592.0px;transform-origin:100% 50%;transform:scaleX(0.9287);">0.0000</div>
<div style="position:absolute;left:4px;top:308px;width:329px;height:20px;background:#ececec;"></div>
<div style="position:absolute;left:4px;top:327px;width:329px;height:1px;background:#d0d0d0;"></div>
<div style="position:absolute;left:178px;top:308px;width:1px;height:20px;background:#d0d0d0;"></div>
<svg style="position:absolute;left:6px;top:310px;overflow:visible" width="16" height="16" viewBox="0 0 16 16"><rect x="1.3" y=".4" width="12.8" height="13" rx="2.4" fill="url(#fg)" stroke="#c9a83a" stroke-width=".9"/><path d="M3 1.600h9.400" stroke="#fdf3c0" stroke-width=".9"/><path d="M10.300 3.300c-1.900-.9-2.700.1-3 1.900L6.200 10.600c-.3 1.300-1 1.700-2 1.200M5 6.400h4.300" stroke="#5a4810" stroke-width="1.050" fill="none" stroke-linecap="round"/><path d="M12.100 8.700l3 3-3 3-3-3z" fill="#f7df62" stroke="#8a6c14" stroke-width=".8"/></svg>
<div style="position:absolute;top:310.0px;height:16px;line-height:16px;font-size:11.5px;color:#000;white-space:pre;left:24.5px;transform-origin:0 50%;transform:scaleX(0.9704);">2.Buff UP</div>
<div style="position:absolute;top:310.0px;height:16px;line-height:16px;font-size:11.5px;color:#000;white-space:pre;right:1592.0px;transform-origin:100% 50%;transform:scaleX(0.9287);">8.3316</div>
<div style="position:absolute;left:4px;top:328px;width:329px;height:20px;background:#ffffff;"></div>
<div style="position:absolute;left:4px;top:347px;width:329px;height:1px;background:#d0d0d0;"></div>
<div style="position:absolute;left:178px;top:328px;width:1px;height:20px;background:#d0d0d0;"></div>
<svg style="position:absolute;left:6px;top:330px;overflow:visible" width="16" height="16" viewBox="0 0 16 16"><rect x="1.3" y=".4" width="12.8" height="13" rx="2.4" fill="url(#fg)" stroke="#c9a83a" stroke-width=".9"/><path d="M3 1.600h9.400" stroke="#fdf3c0" stroke-width=".9"/><path d="M10.300 3.300c-1.900-.9-2.700.1-3 1.900L6.200 10.600c-.3 1.300-1 1.700-2 1.200M5 6.400h4.300" stroke="#5a4810" stroke-width="1.050" fill="none" stroke-linecap="round"/><path d="M12.100 8.700l3 3-3 3-3-3z" fill="#f7df62" stroke="#8a6c14" stroke-width=".8"/></svg>
<div style="position:absolute;top:330.0px;height:16px;line-height:16px;font-size:11.5px;color:#000;white-space:pre;left:24.5px;transform-origin:0 50%;transform:scaleX(0.9704);">3.Buff DOWN</div>
<div style="position:absolute;top:330.0px;height:16px;line-height:16px;font-size:11.5px;color:#000;white-space:pre;right:1592.0px;transform-origin:100% 50%;transform:scaleX(0.9287);">0.0000</div>
<div style="position:absolute;left:4px;top:348px;width:329px;height:20px;background:#ececec;"></div>
<div style="position:absolute;left:178px;top:348px;width:1px;height:20px;background:#d0d0d0;"></div>
<svg style="position:absolute;left:6px;top:350px;overflow:visible" width="16" height="16" viewBox="0 0 16 16"><rect x="1.3" y=".4" width="12.8" height="13" rx="2.4" fill="url(#fg)" stroke="#c9a83a" stroke-width=".9"/><path d="M3 1.600h9.400" stroke="#fdf3c0" stroke-width=".9"/><path d="M10.300 3.300c-1.900-.9-2.700.1-3 1.900L6.200 10.600c-.3 1.300-1 1.700-2 1.200M5 6.400h4.300" stroke="#5a4810" stroke-width="1.050" fill="none" stroke-linecap="round"/><path d="M12.100 8.700l3 3-3 3-3-3z" fill="#f7df62" stroke="#8a6c14" stroke-width=".8"/></svg>
<div style="position:absolute;top:350.0px;height:16px;line-height:16px;font-size:11.5px;color:#000;white-space:pre;left:24.5px;transform-origin:0 50%;transform:scaleX(0.9704);">4.Buff CCI</div>
<div style="position:absolute;top:350.0px;height:16px;line-height:16px;font-size:11.5px;color:#000;white-space:pre;right:1592.0px;transform-origin:100% 50%;transform:scaleX(0.9287);">8.3316</div>
<div style="position:absolute;left:333px;top:88px;width:17px;height:280px;background:#f0f0f0;"></div>
<div style="position:absolute;left:334px;top:258px;width:15px;height:54px;background:#cdcdcd;"></div>
<svg style="position:absolute;left:336px;top:93px" width="9" height="7" viewBox="0 0 9 7"><path d="M1.200 5.500L4.500 2L7.800 5.500" stroke="#5c5c5c" stroke-width="2" fill="none"/></svg><svg style="position:absolute;left:336px;top:354px" width="9" height="7" viewBox="0 0 9 7"><path d="M1.200 1.500L4.500 5L7.800 1.500" stroke="#5c5c5c" stroke-width="2" fill="none"/></svg>
<div style="position:absolute;left:3px;top:373px;width:333px;height:13px;background:linear-gradient(#d6e2f0,#c4d5e8);"></div>
<div style="position:absolute;left:336px;top:373px;width:17px;height:13px;background:#f6f6f6;"></div>
<div style="position:absolute;top:371.0px;height:16px;line-height:16px;font-size:11.5px;color:#000;white-space:pre;left:5.5px;transform-origin:0 50%;transform:scaleX(0.9287);">Navigator</div>
<svg style="position:absolute;left:340px;top:376px" width="8" height="7" viewBox="0 0 8 7"><path d="M1.300 1.200L6.700 5.800M6.700 1.200L1.300 5.800" stroke="#111" stroke-width="1.700"/></svg>
<div style="position:absolute;left:3px;top:387px;width:348px;height:257px;background:#ffffff;border:1px solid #a0a0a0;border-bottom:none;border-right:none;box-sizing:border-box;"></div>
<div style="position:absolute;left:17px;top:388px;width:1px;height:255px;background:repeating-linear-gradient(#9a9a9a 0 1px,transparent 1px 2px)"></div>
<div style="position:absolute;left:38px;top:388px;width:1px;height:255px;background:repeating-linear-gradient(#9a9a9a 0 1px,transparent 1px 2px)"></div>
<div style="position:absolute;left:39px;top:399px;width:10px;height:1px;background:repeating-linear-gradient(90deg,#9a9a9a 0 1px,transparent 1px 2px)"></div>
<svg style="position:absolute;left:50px;top:390px;overflow:visible" width="16" height="16" viewBox="0 0 16 16"><rect x="1.3" y=".4" width="12.8" height="13" rx="2.4" fill="url(#fg)" stroke="#c9a83a" stroke-width=".9"/><path d="M3 1.600h9.400" stroke="#fdf3c0" stroke-width=".9"/><path d="M10.300 3.300c-1.900-.9-2.700.1-3 1.900L6.200 10.600c-.3 1.300-1 1.700-2 1.200M5 6.400h4.300" stroke="#5a4810" stroke-width="1.050" fill="none" stroke-linecap="round"/><path d="M12.100 8.700l3 3-3 3-3-3z" fill="#f5d94a" stroke="#8a6c14" stroke-width=".8"/></svg>
<div style="position:absolute;top:390.0px;height:16px;line-height:16px;font-size:11.5px;color:#000;white-space:pre;left:73.2px;transform-origin:0 50%;">Hiani_Fractals v2</div>
<div style="position:absolute;left:39px;top:417px;width:10px;height:1px;background:repeating-linear-gradient(90deg,#9a9a9a 0 1px,transparent 1px 2px)"></div>
<svg style="position:absolute;left:50px;top:408px;overflow:visible" width="16" height="16" viewBox="0 0 16 16"><rect x="1.3" y=".4" width="12.8" height="13" rx="2.4" fill="url(#fg)" stroke="#c9a83a" stroke-width=".9"/><path d="M3 1.600h9.400" stroke="#fdf3c0" stroke-width=".9"/><path d="M10.300 3.300c-1.900-.9-2.700.1-3 1.900L6.200 10.600c-.3 1.300-1 1.700-2 1.200M5 6.400h4.300" stroke="#5a4810" stroke-width="1.050" fill="none" stroke-linecap="round"/><path d="M12.100 8.700l3 3-3 3-3-3z" fill="#f5d94a" stroke="#8a6c14" stroke-width=".8"/></svg>
<div style="position:absolute;top:408.0px;height:16px;line-height:16px;font-size:11.5px;color:#000;white-space:pre;left:73.2px;transform-origin:0 50%;">Hiani_Fractals v3</div>
<div style="position:absolute;left:39px;top:435px;width:10px;height:1px;background:repeating-linear-gradient(90deg,#9a9a9a 0 1px,transparent 1px 2px)"></div>
<svg style="position:absolute;left:50px;top:426px;overflow:visible" width="16" height="16" viewBox="0 0 16 16"><rect x="1.3" y=".4" width="12.8" height="13" rx="2.4" fill="url(#fg)" stroke="#c9a83a" stroke-width=".9"/><path d="M3 1.600h9.400" stroke="#fdf3c0" stroke-width=".9"/><path d="M10.300 3.300c-1.900-.9-2.700.1-3 1.900L6.200 10.600c-.3 1.300-1 1.700-2 1.200M5 6.400h4.300" stroke="#5a4810" stroke-width="1.050" fill="none" stroke-linecap="round"/><path d="M12.100 8.700l3 3-3 3-3-3z" fill="#f5d94a" stroke="#8a6c14" stroke-width=".8"/></svg>
<div style="position:absolute;top:426.0px;height:16px;line-height:16px;font-size:11.5px;color:#000;white-space:pre;left:73.2px;transform-origin:0 50%;">Hiani_Fractals v4</div>
<div style="position:absolute;left:39px;top:453px;width:10px;height:1px;background:repeating-linear-gradient(90deg,#9a9a9a 0 1px,transparent 1px 2px)"></div>
<svg style="position:absolute;left:50px;top:444px;overflow:visible" width="16" height="16" viewBox="0 0 16 16"><rect x="1.3" y=".4" width="12.8" height="13" rx="2.4" fill="url(#fg)" stroke="#c9a83a" stroke-width=".9"/><path d="M3 1.600h9.400" stroke="#fdf3c0" stroke-width=".9"/><path d="M10.300 3.300c-1.900-.9-2.700.1-3 1.900L6.200 10.600c-.3 1.300-1 1.700-2 1.200M5 6.400h4.300" stroke="#5a4810" stroke-width="1.050" fill="none" stroke-linecap="round"/><path d="M12.100 8.700l3 3-3 3-3-3z" fill="#f5d94a" stroke="#8a6c14" stroke-width=".8"/></svg>
<div style="position:absolute;top:444.0px;height:16px;line-height:16px;font-size:11.5px;color:#000;white-space:pre;left:73.2px;transform-origin:0 50%;">Hiani_Fratals</div>
<div style="position:absolute;left:39px;top:471px;width:10px;height:1px;background:repeating-linear-gradient(90deg,#9a9a9a 0 1px,transparent 1px 2px)"></div>
<svg style="position:absolute;left:50px;top:462px;overflow:visible" width="16" height="16" viewBox="0 0 16 16"><rect x="1.3" y=".4" width="12.8" height="13" rx="2.4" fill="url(#fg)" stroke="#c9a83a" stroke-width=".9"/><path d="M3 1.600h9.400" stroke="#fdf3c0" stroke-width=".9"/><path d="M10.300 3.300c-1.900-.9-2.700.1-3 1.900L6.200 10.600c-.3 1.300-1 1.700-2 1.200M5 6.400h4.300" stroke="#5a4810" stroke-width="1.050" fill="none" stroke-linecap="round"/><path d="M12.100 8.700l3 3-3 3-3-3z" fill="#f5d94a" stroke="#8a6c14" stroke-width=".8"/></svg>
<div style="position:absolute;top:462.0px;height:16px;line-height:16px;font-size:11.5px;color:#000;white-space:pre;left:73.2px;transform-origin:0 50%;">Hiani_HL_XULine</div>
<div style="position:absolute;left:39px;top:489px;width:10px;height:1px;background:repeating-linear-gradient(90deg,#9a9a9a 0 1px,transparent 1px 2px)"></div>
<svg style="position:absolute;left:50px;top:480px;overflow:visible" width="16" height="16" viewBox="0 0 16 16"><rect x="1.3" y=".4" width="12.8" height="13" rx="2.4" fill="url(#fg)" stroke="#c9a83a" stroke-width=".9"/><path d="M3 1.600h9.400" stroke="#fdf3c0" stroke-width=".9"/><path d="M10.300 3.300c-1.900-.9-2.700.1-3 1.900L6.200 10.600c-.3 1.300-1 1.700-2 1.200M5 6.400h4.300" stroke="#5a4810" stroke-width="1.050" fill="none" stroke-linecap="round"/><path d="M12.100 8.700l3 3-3 3-3-3z" fill="#f5d94a" stroke="#8a6c14" stroke-width=".8"/></svg>
<div style="position:absolute;top:480.0px;height:16px;line-height:16px;font-size:11.5px;color:#000;white-space:pre;left:73.2px;transform-origin:0 50%;">Hiani_HL_XULine v2</div>
<div style="position:absolute;left:39px;top:507px;width:10px;height:1px;background:repeating-linear-gradient(90deg,#9a9a9a 0 1px,transparent 1px 2px)"></div>
<svg style="position:absolute;left:50px;top:498px;overflow:visible" width="16" height="16" viewBox="0 0 16 16"><rect x="1.3" y=".4" width="12.8" height="13" rx="2.4" fill="url(#fg)" stroke="#c9a83a" stroke-width=".9"/><path d="M3 1.600h9.400" stroke="#fdf3c0" stroke-width=".9"/><path d="M10.300 3.300c-1.900-.9-2.700.1-3 1.900L6.200 10.600c-.3 1.300-1 1.700-2 1.200M5 6.400h4.300" stroke="#5a4810" stroke-width="1.050" fill="none" stroke-linecap="round"/><path d="M12.100 8.700l3 3-3 3-3-3z" fill="#f5d94a" stroke="#8a6c14" stroke-width=".8"/></svg>
<div style="position:absolute;top:498.0px;height:16px;line-height:16px;font-size:11.5px;color:#000;white-space:pre;left:73.2px;transform-origin:0 50%;">Hiani_HL_XULine(backup)</div>
<div style="position:absolute;left:39px;top:525px;width:10px;height:1px;background:repeating-linear-gradient(90deg,#9a9a9a 0 1px,transparent 1px 2px)"></div>
<svg style="position:absolute;left:50px;top:516px;overflow:visible" width="16" height="16" viewBox="0 0 16 16"><rect x="1.3" y=".4" width="12.8" height="13" rx="2.4" fill="url(#fg)" stroke="#c9a83a" stroke-width=".9"/><path d="M3 1.600h9.400" stroke="#fdf3c0" stroke-width=".9"/><path d="M10.300 3.300c-1.900-.9-2.700.1-3 1.900L6.200 10.600c-.3 1.300-1 1.700-2 1.200M5 6.400h4.300" stroke="#5a4810" stroke-width="1.050" fill="none" stroke-linecap="round"/><path d="M12.100 8.700l3 3-3 3-3-3z" fill="#f5d94a" stroke="#8a6c14" stroke-width=".8"/></svg>
<div style="position:absolute;top:516.0px;height:16px;line-height:16px;font-size:11.5px;color:#000;white-space:pre;left:73.2px;transform-origin:0 50%;">Hiani_HL_XULineSL</div>
<div style="position:absolute;left:39px;top:543px;width:10px;height:1px;background:repeating-linear-gradient(90deg,#9a9a9a 0 1px,transparent 1px 2px)"></div>
<svg style="position:absolute;left:50px;top:534px;overflow:visible" width="16" height="16" viewBox="0 0 16 16"><rect x="1.3" y=".4" width="12.8" height="13" rx="2.4" fill="url(#fg)" stroke="#c9a83a" stroke-width=".9"/><path d="M3 1.600h9.400" stroke="#fdf3c0" stroke-width=".9"/><path d="M10.300 3.300c-1.900-.9-2.700.1-3 1.900L6.200 10.600c-.3 1.300-1 1.700-2 1.200M5 6.400h4.300" stroke="#5a4810" stroke-width="1.050" fill="none" stroke-linecap="round"/><path d="M12.100 8.700l3 3-3 3-3-3z" fill="#f5d94a" stroke="#8a6c14" stroke-width=".8"/></svg>
<div style="position:absolute;top:534.0px;height:16px;line-height:16px;font-size:11.5px;color:#000;white-space:pre;left:73.2px;transform-origin:0 50%;">Hiani_HL_XULinez1</div>
<div style="position:absolute;left:39px;top:561px;width:10px;height:1px;background:repeating-linear-gradient(90deg,#9a9a9a 0 1px,transparent 1px 2px)"></div>
<svg style="position:absolute;left:50px;top:552px;overflow:visible" width="16" height="16" viewBox="0 0 16 16"><rect x="1.3" y=".4" width="12.8" height="13" rx="2.4" fill="url(#fg)" stroke="#c9a83a" stroke-width=".9"/><path d="M3 1.600h9.400" stroke="#fdf3c0" stroke-width=".9"/><path d="M10.300 3.300c-1.900-.9-2.700.1-3 1.900L6.200 10.600c-.3 1.300-1 1.700-2 1.200M5 6.400h4.300" stroke="#5a4810" stroke-width="1.050" fill="none" stroke-linecap="round"/><path d="M12.100 8.700l3 3-3 3-3-3z" fill="#f5d94a" stroke="#8a6c14" stroke-width=".8"/></svg>
<div style="position:absolute;top:552.0px;height:16px;line-height:16px;font-size:11.5px;color:#000;white-space:pre;left:73.2px;transform-origin:0 50%;">Hiani_HL_XULinez2</div>
<div style="position:absolute;left:39px;top:579px;width:10px;height:1px;background:repeating-linear-gradient(90deg,#9a9a9a 0 1px,transparent 1px 2px)"></div>
<svg style="position:absolute;left:50px;top:570px;overflow:visible" width="16" height="16" viewBox="0 0 16 16"><rect x="1.3" y=".4" width="12.8" height="13" rx="2.4" fill="url(#fg)" stroke="#c9a83a" stroke-width=".9"/><path d="M3 1.600h9.400" stroke="#fdf3c0" stroke-width=".9"/><path d="M10.300 3.300c-1.900-.9-2.700.1-3 1.900L6.200 10.600c-.3 1.300-1 1.700-2 1.200M5 6.400h4.300" stroke="#5a4810" stroke-width="1.050" fill="none" stroke-linecap="round"/><path d="M12.100 8.700l3 3-3 3-3-3z" fill="#8a8a8a" stroke="#8a6c14" stroke-width=".8"/></svg>
<div style="position:absolute;top:570.0px;height:16px;line-height:16px;font-size:11.5px;color:#000;white-space:pre;left:73.2px;transform-origin:0 50%;">Hiani_HUD_HHHL</div>
<div style="position:absolute;left:39px;top:597px;width:10px;height:1px;background:repeating-linear-gradient(90deg,#9a9a9a 0 1px,transparent 1px 2px)"></div>
<svg style="position:absolute;left:50px;top:588px;overflow:visible" width="16" height="16" viewBox="0 0 16 16"><rect x="1.3" y=".4" width="12.8" height="13" rx="2.4" fill="url(#fg)" stroke="#c9a83a" stroke-width=".9"/><path d="M3 1.600h9.400" stroke="#fdf3c0" stroke-width=".9"/><path d="M10.300 3.300c-1.900-.9-2.700.1-3 1.900L6.200 10.600c-.3 1.300-1 1.700-2 1.200M5 6.400h4.300" stroke="#5a4810" stroke-width="1.050" fill="none" stroke-linecap="round"/><path d="M12.100 8.700l3 3-3 3-3-3z" fill="#f5d94a" stroke="#8a6c14" stroke-width=".8"/></svg>
<div style="position:absolute;top:588.0px;height:16px;line-height:16px;font-size:11.5px;color:#000;white-space:pre;left:73.2px;transform-origin:0 50%;">Hiani_K1</div>
<div style="position:absolute;left:39px;top:615px;width:10px;height:1px;background:repeating-linear-gradient(90deg,#9a9a9a 0 1px,transparent 1px 2px)"></div>
<svg style="position:absolute;left:50px;top:606px;overflow:visible" width="16" height="16" viewBox="0 0 16 16"><rect x="1.3" y=".4" width="12.8" height="13" rx="2.4" fill="url(#fg)" stroke="#c9a83a" stroke-width=".9"/><path d="M3 1.600h9.400" stroke="#fdf3c0" stroke-width=".9"/><path d="M10.300 3.300c-1.900-.9-2.700.1-3 1.900L6.200 10.600c-.3 1.300-1 1.700-2 1.200M5 6.400h4.300" stroke="#5a4810" stroke-width="1.050" fill="none" stroke-linecap="round"/><path d="M12.100 8.700l3 3-3 3-3-3z" fill="#f5d94a" stroke="#8a6c14" stroke-width=".8"/></svg>
<div style="position:absolute;top:606.0px;height:16px;line-height:16px;font-size:11.5px;color:#000;white-space:pre;left:73.2px;transform-origin:0 50%;">Hiani_K1(bk)</div>
<div style="position:absolute;left:39px;top:633px;width:10px;height:1px;background:repeating-linear-gradient(90deg,#9a9a9a 0 1px,transparent 1px 2px)"></div>
<svg style="position:absolute;left:50px;top:624px;overflow:visible" width="16" height="16" viewBox="0 0 16 16"><rect x="1.3" y=".4" width="12.8" height="13" rx="2.4" fill="url(#fg)" stroke="#c9a83a" stroke-width=".9"/><path d="M3 1.600h9.400" stroke="#fdf3c0" stroke-width=".9"/><path d="M10.300 3.300c-1.900-.9-2.700.1-3 1.900L6.200 10.600c-.3 1.300-1 1.700-2 1.200M5 6.400h4.300" stroke="#5a4810" stroke-width="1.050" fill="none" stroke-linecap="round"/><path d="M12.100 8.700l3 3-3 3-3-3z" fill="#f5d94a" stroke="#8a6c14" stroke-width=".8"/></svg>
<div style="position:absolute;top:624.0px;height:16px;line-height:16px;font-size:11.5px;color:#000;white-space:pre;left:73.2px;transform-origin:0 50%;">Hiani_K1_HHHL(norp)</div>
<div style="position:absolute;left:50px;top:641px;width:16px;height:3px;overflow:hidden"><svg style="position:absolute;left:0;top:0;overflow:visible" width="16" height="16" viewBox="0 0 16 16"><rect x="1.3" y=".4" width="12.8" height="13" rx="2.4" fill="url(#fg)" stroke="#c9a83a" stroke-width=".9"/><path d="M3 1.600h9.400" stroke="#fdf3c0" stroke-width=".9"/><path d="M10.300 3.300c-1.900-.9-2.700.1-3 1.900L6.200 10.600c-.3 1.300-1 1.700-2 1.200M5 6.400h4.300" stroke="#5a4810" stroke-width="1.050" fill="none" stroke-linecap="round"/><path d="M12.100 8.700l3 3-3 3-3-3z" fill="#f7df62" stroke="#8a6c14" stroke-width=".8"/></svg></div>
<div style="position:absolute;left:333px;top:388px;width:17px;height:255px;background:#f0f0f0;"></div>
<div style="position:absolute;left:334px;top:486px;width:15px;height:17px;background:#cdcdcd;"></div>
<svg style="position:absolute;left:336px;top:393px" width="9" height="7" viewBox="0 0 9 7"><path d="M1.200 5.500L4.500 2L7.800 5.500" stroke="#5c5c5c" stroke-width="2" fill="none"/></svg><svg style="position:absolute;left:336px;top:629px" width="9" height="7" viewBox="0 0 9 7"><path d="M1.200 1.500L4.500 5L7.800 1.500" stroke="#5c5c5c" stroke-width="2" fill="none"/></svg>
<div style="position:absolute;left:3px;top:644px;width:348px;height:22px;background:#f0f0f0;"></div>
<div style="position:absolute;left:76px;top:645px;width:274px;height:1px;background:#000;"></div>
<div style="position:absolute;left:6px;top:645px;width:71px;height:20px;background:#ffffff;border:1px solid #000;border-top:none;box-sizing:border-box;"></div>
<div style="position:absolute;left:4px;top:645px;width:3px;height:1px;background:#000;"></div>
<div style="position:absolute;top:646.5px;height:18px;line-height:18px;font-size:12.5px;color:#000;white-space:pre;left:16.4px;transform-origin:0 50%;transform:scaleX(0.9899);">Common</div>
<div style="position:absolute;top:646.5px;height:18px;line-height:18px;font-size:12.5px;color:#6a6a6a;white-space:pre;left:87.5px;transform-origin:0 50%;transform:scaleX(0.8948);">Favorites</div>
<div style="position:absolute;left:144px;top:648px;width:1px;height:14px;background:#555;"></div>
<div style="position:absolute;left:355px;top:72px;width:1563px;height:598px;background:#0f1a40;"></div>
<div style="position:absolute;left:355px;top:71px;width:1563px;height:1px;background:#5c6274;"></div>
<div style="position:absolute;left:355px;top:72px;width:1563px;height:1px;background:#060d2e;"></div>
<div style="position:absolute;left:355px;top:73px;width:1563px;height:1px;background:#0a1335;"></div>
<div style="position:absolute;left:1918px;top:71px;width:2px;height:599px;background:#f0f0f0;"></div>
<div style="position:absolute;left:356px;top:670px;width:1564px;height:2px;background:#f0f0f0;"></div>
<svg style="position:absolute;left:0;top:0" width="1920" height="672" viewBox="0 0 1920 672">
<rect x="357.5" y="74.5" width="1510" height="342.0" fill="none" stroke="#b4b4b4" stroke-width="1" shape-rendering="crispEdges"/>
<rect x="357.5" y="418.5" width="1510" height="10.0" fill="none" stroke="#b4b4b4" stroke-width="1" shape-rendering="crispEdges"/>
<rect x="357.5" y="430.5" width="1510" height="10.0" fill="none" stroke="#b4b4b4" stroke-width="1" shape-rendering="crispEdges"/>
<rect x="357.5" y="442.5" width="1510" height="207.0" fill="none" stroke="#b4b4b4" stroke-width="1" shape-rendering="crispEdges"/>
<path d="M1868 83.5H1870" stroke="#b4b4b4" shape-rendering="crispEdges"/>
<path d="M1868 116.5H1870" stroke="#b4b4b4" shape-rendering="crispEdges"/>
<path d="M1868 149.5H1870" stroke="#b4b4b4" shape-rendering="crispEdges"/>
<path d="M1868 182.5H1870" stroke="#b4b4b4" shape-rendering="crispEdges"/>
<path d="M1868 215.5H1870" stroke="#b4b4b4" shape-rendering="crispEdges"/>
<path d="M1868 248.5H1870" stroke="#b4b4b4" shape-rendering="crispEdges"/>
<path d="M1868 281.5H1870" stroke="#b4b4b4" shape-rendering="crispEdges"/>
<path d="M1868 314.5H1870" stroke="#b4b4b4" shape-rendering="crispEdges"/>
<path d="M1868 347.5H1870" stroke="#b4b4b4" shape-rendering="crispEdges"/>
<path d="M1868 380.5H1870" stroke="#b4b4b4" shape-rendering="crispEdges"/>
<path d="M1868 413.5H1870" stroke="#b4b4b4" shape-rendering="crispEdges"/>
<defs><clipPath id="cm"><rect x="358" y="74" width="1509" height="342"/></clipPath><clipPath id="ci"><rect x="358" y="443" width="1509" height="206"/></clipPath></defs>
<g clip-path="url(#cm)">
<g shape-rendering="crispEdges"><rect x="357" y="187.5" width="2" height="85.0" fill="#ffffff"/><rect x="373" y="186.2" width="2" height="42.5" fill="#ffffff"/><rect x="389" y="210.0" width="2" height="20.0" fill="#ffffff"/><rect x="405" y="186.2" width="2" height="47.5" fill="#ffffff"/><rect x="421" y="189.5" width="2" height="10.5" fill="#ffffff"/><rect x="437" y="181.2" width="2" height="32.5" fill="#ffffff"/><rect x="453" y="162.5" width="2" height="50.0" fill="#ffffff"/><rect x="469" y="193.0" width="2" height="17.0" fill="#ffffff"/><rect x="485" y="187.5" width="2" height="26.2" fill="#ffffff"/><rect x="501" y="171.2" width="2" height="31.2" fill="#ffffff"/><rect x="517" y="171.2" width="2" height="7.5" fill="#ffffff"/><rect x="533" y="169.5" width="2" height="17.5" fill="#ffffff"/><rect x="549" y="165.0" width="2" height="17.0" fill="#ffffff"/><rect x="565" y="144.5" width="2" height="40.0" fill="#ffffff"/><rect x="581" y="121.2" width="2" height="57.5" fill="#ffffff"/><rect x="597" y="92.0" width="2" height="41.8" fill="#ffffff"/><rect x="613" y="103.8" width="2" height="7.5" fill="#ffffff"/><rect x="629" y="110.0" width="2" height="37.0" fill="#ffffff"/><rect x="645" y="127.0" width="2" height="36.8" fill="#ffffff"/><rect x="661" y="163.8" width="2" height="15.0" fill="#ffffff"/><rect x="677" y="165.0" width="2" height="15.0" fill="#ffffff"/><rect x="693" y="170.0" width="2" height="12.5" fill="#ffffff"/><rect x="709" y="172.5" width="2" height="37.5" fill="#ffffff"/><rect x="725" y="203.8" width="2" height="22.5" fill="#ffffff"/><rect x="741" y="201.2" width="2" height="36.2" fill="#ffffff"/><rect x="757" y="222.0" width="2" height="23.0" fill="#ffffff"/><rect x="773" y="240.0" width="2" height="16.2" fill="#ffffff"/><rect x="789" y="236.2" width="2" height="25.0" fill="#ffffff"/><rect x="805" y="233.8" width="2" height="26.2" fill="#ffffff"/><rect x="821" y="243.8" width="2" height="16.2" fill="#ffffff"/><rect x="837" y="255.0" width="2" height="19.5" fill="#ffffff"/><rect x="853" y="271.2" width="2" height="7.5" fill="#ffffff"/><rect x="869" y="272.0" width="2" height="40.0" fill="#ffffff"/><rect x="885" y="292.0" width="2" height="33.0" fill="#ffffff"/><rect x="901" y="280.0" width="2" height="30.0" fill="#ffffff"/><rect x="917" y="263.8" width="2" height="23.2" fill="#ffffff"/><rect x="933" y="253.8" width="2" height="26.2" fill="#ffffff"/><rect x="949" y="233.8" width="2" height="30.0" fill="#ffffff"/><rect x="965" y="231.2" width="2" height="32.5" fill="#ffffff"/><rect x="981" y="243.8" width="2" height="12.5" fill="#ffffff"/><rect x="997" y="245.0" width="2" height="23.8" fill="#ffffff"/><rect x="1013" y="240.0" width="2" height="32.5" fill="#ffffff"/><rect x="1029" y="243.8" width="2" height="28.8" fill="#ffffff"/><rect x="1045" y="248.8" width="2" height="17.5" fill="#ffffff"/><rect x="1061" y="258.8" width="2" height="12.5" fill="#ffffff"/><rect x="1077" y="248.0" width="2" height="22.5" fill="#ffffff"/><rect x="1093" y="254.2" width="2" height="10.2" fill="#ffffff"/><rect x="1109" y="245.0" width="2" height="23.8" fill="#ffffff"/><rect x="1125" y="263.8" width="2" height="15.0" fill="#ffffff"/><rect x="1141" y="256.2" width="2" height="18.8" fill="#ffffff"/><rect x="1157" y="258.8" width="2" height="24.2" fill="#ffffff"/><rect x="1173" y="272.0" width="2" height="23.0" fill="#ffffff"/><rect x="1189" y="274.5" width="2" height="8.0" fill="#ffffff"/><rect x="1205" y="275.0" width="2" height="17.5" fill="#ffffff"/><rect x="1221" y="284.5" width="2" height="19.2" fill="#ffffff"/><rect x="1237" y="276.2" width="2" height="32.5" fill="#ffffff"/><rect x="1253" y="284.5" width="2" height="11.8" fill="#ffffff"/><rect x="1269" y="295.0" width="2" height="18.8" fill="#ffffff"/><rect x="1285" y="307.0" width="2" height="19.2" fill="#ffffff"/><rect x="1301" y="292.5" width="2" height="17.5" fill="#ffffff"/><rect x="1317" y="290.0" width="2" height="20.0" fill="#ffffff"/><rect x="1333" y="296.2" width="2" height="23.8" fill="#ffffff"/><rect x="1349" y="288.8" width="2" height="16.2" fill="#ffffff"/><rect x="1365" y="270.0" width="2" height="35.0" fill="#ffffff"/><rect x="1381" y="292.0" width="2" height="5.5" fill="#ffffff"/><rect x="1397" y="293.8" width="2" height="23.8" fill="#ffffff"/><rect x="1413" y="303.8" width="2" height="15.0" fill="#ffffff"/><rect x="1429" y="304.2" width="2" height="13.8" fill="#ffffff"/><rect x="1445" y="321.2" width="2" height="42.5" fill="#ffffff"/><rect x="1461" y="331.2" width="2" height="18.8" fill="#ffffff"/><rect x="1477" y="343.0" width="2" height="12.0" fill="#ffffff"/><rect x="1493" y="362.5" width="2" height="14.5" fill="#ffffff"/><rect x="1509" y="374.2" width="2" height="27.0" fill="#ffffff"/><rect x="1525" y="378.8" width="2" height="16.2" fill="#ffffff"/><rect x="1541" y="325.0" width="2" height="71.2" fill="#ffffff"/><rect x="1557" y="339.2" width="2" height="23.2" fill="#ffffff"/><rect x="1573" y="358.0" width="2" height="7.0" fill="#ffffff"/><rect x="1589" y="358.0" width="2" height="27.0" fill="#ffffff"/><rect x="1605" y="353.8" width="2" height="32.5" fill="#ffffff"/><rect x="1621" y="353.8" width="2" height="15.0" fill="#ffffff"/><rect x="1637" y="365.0" width="2" height="25.0" fill="#ffffff"/><rect x="1653" y="374.2" width="2" height="14.5" fill="#ffffff"/><rect x="1669" y="376.2" width="2" height="17.5" fill="#ffffff"/><rect x="1685" y="388.8" width="2" height="12.5" fill="#ffffff"/><rect x="1701" y="343.2" width="2" height="51.7" fill="#ffffff"/><rect x="1717" y="336.1" width="2" height="34.0" fill="#ffffff"/><rect x="1733" y="335.4" width="2" height="34.3" fill="#ffffff"/><rect x="1749" y="351.0" width="2" height="53.8" fill="#ffffff"/><rect x="1765" y="358.1" width="2" height="48.1" fill="#ffffff"/><rect x="1781" y="371.9" width="2" height="21.5" fill="#ffffff"/><rect x="1797" y="386.4" width="2" height="7.1" fill="#ffffff"/><rect x="1813" y="383.5" width="2" height="14.9" fill="#ffffff"/><rect x="1829" y="385.0" width="2" height="12.7" fill="#ffffff"/><rect x="1845" y="387.1" width="2" height="12.0" fill="#ffffff"/><rect x="1861" y="396.3" width="2" height="7.1" fill="#ffffff"/><rect x="350" y="207.0" width="16" height="52.5" fill="#1e90ff"/><rect x="366" y="206.2" width="16" height="10.0" fill="#808080"/><rect x="382" y="215.0" width="16" height="7.0" fill="#808080"/><rect x="398" y="191.2" width="16" height="30.8" fill="#c3c9d1"/><rect x="414" y="189.5" width="16" height="3.5" fill="#c3c9d1"/><rect x="430" y="185.0" width="16" height="8.0" fill="#c3c9d1"/><rect x="446" y="185.0" width="16" height="10.0" fill="#808080"/><rect x="462" y="193.0" width="16" height="4.0" fill="#808080"/><rect x="478" y="197.0" width="16" height="2.5" fill="#808080"/><rect x="494" y="171.2" width="16" height="28.2" fill="#c3c9d1"/><rect x="510" y="171.2" width="16" height="7.5" fill="#808080"/><rect x="526" y="174.5" width="16" height="5.0" fill="#c3c9d1"/><rect x="542" y="167.5" width="16" height="11.2" fill="#c3c9d1"/><rect x="558" y="166.2" width="16" height="5.0" fill="#808080"/><rect x="574" y="133.0" width="16" height="38.8" fill="#1e90ff"/><rect x="590" y="103.8" width="16" height="30.0" fill="#1e90ff"/><rect x="606" y="103.8" width="16" height="7.5" fill="#808080"/><rect x="622" y="110.0" width="16" height="37.0" fill="#b22222"/><rect x="638" y="147.0" width="16" height="16.8" fill="#808080"/><rect x="654" y="163.8" width="16" height="12.5" fill="#808080"/><rect x="670" y="172.5" width="16" height="5.0" fill="#c3c9d1"/><rect x="686" y="173.0" width="16" height="2.5" fill="#808080"/><rect x="702" y="175.0" width="16" height="27.5" fill="#808080"/><rect x="718" y="203.8" width="16" height="12.5" fill="#808080"/><rect x="734" y="217.0" width="16" height="9.2" fill="#808080"/><rect x="750" y="225.0" width="16" height="12.5" fill="#808080"/><rect x="766" y="240.0" width="16" height="10.0" fill="#808080"/><rect x="782" y="245.0" width="16" height="5.0" fill="#c3c9d1"/><rect x="798" y="243.8" width="16" height="3.8" fill="#808080"/><rect x="814" y="247.0" width="16" height="9.2" fill="#808080"/><rect x="830" y="255.0" width="16" height="19.5" fill="#808080"/><rect x="846" y="271.2" width="16" height="5.0" fill="#c3c9d1"/><rect x="862" y="272.0" width="16" height="36.8" fill="#b22222"/><rect x="878" y="303.8" width="16" height="6.8" fill="#c3c9d1"/><rect x="894" y="286.2" width="16" height="20.8" fill="#c3c9d1"/><rect x="910" y="263.8" width="16" height="23.2" fill="#c3c9d1"/><rect x="926" y="257.0" width="16" height="8.0" fill="#c3c9d1"/><rect x="942" y="233.8" width="16" height="24.2" fill="#1e90ff"/><rect x="958" y="231.2" width="16" height="13.8" fill="#808080"/><rect x="974" y="248.8" width="16" height="6.2" fill="#808080"/><rect x="990" y="253.8" width="16" height="8.2" fill="#808080"/><rect x="1006" y="242.0" width="16" height="18.0" fill="#c3c9d1"/><rect x="1022" y="243.8" width="16" height="21.2" fill="#808080"/><rect x="1038" y="257.5" width="16" height="8.8" fill="#c3c9d1"/><rect x="1054" y="258.8" width="16" height="12.5" fill="#808080"/><rect x="1070" y="254.2" width="16" height="16.2" fill="#c3c9d1"/><rect x="1086" y="254.2" width="16" height="10.2" fill="#808080"/><rect x="1102" y="263.0" width="16" height="2.5" fill="#808080"/><rect x="1118" y="263.8" width="16" height="11.2" fill="#808080"/><rect x="1134" y="263.8" width="16" height="10.0" fill="#c3c9d1"/><rect x="1150" y="263.0" width="16" height="20.0" fill="#808080"/><rect x="1166" y="276.2" width="16" height="5.8" fill="#c3c9d1"/><rect x="1182" y="274.5" width="16" height="5.5" fill="#808080"/><rect x="1198" y="278.8" width="16" height="7.5" fill="#808080"/><rect x="1214" y="284.5" width="16" height="13.5" fill="#808080"/><rect x="1230" y="284.5" width="16" height="12.5" fill="#c3c9d1"/><rect x="1246" y="284.5" width="16" height="11.8" fill="#808080"/><rect x="1262" y="295.0" width="16" height="13.0" fill="#808080"/><rect x="1278" y="307.0" width="16" height="4.8" fill="#808080"/><rect x="1294" y="307.5" width="16" height="2.5" fill="#c3c9d1"/><rect x="1310" y="296.2" width="16" height="12.5" fill="#c3c9d1"/><rect x="1326" y="296.2" width="16" height="2.0" fill="#808080"/><rect x="1342" y="296.2" width="16" height="5.8" fill="#808080"/><rect x="1358" y="293.0" width="16" height="10.8" fill="#c3c9d1"/><rect x="1374" y="292.0" width="16" height="5.5" fill="#808080"/><rect x="1390" y="297.5" width="16" height="12.5" fill="#808080"/><rect x="1406" y="303.8" width="16" height="6.2" fill="#c3c9d1"/><rect x="1422" y="304.2" width="16" height="13.8" fill="#808080"/><rect x="1438" y="321.2" width="16" height="27.5" fill="#b22222"/><rect x="1454" y="345.5" width="16" height="2.0" fill="#808080"/><rect x="1470" y="343.0" width="16" height="12.0" fill="#808080"/><rect x="1486" y="362.5" width="16" height="14.5" fill="#808080"/><rect x="1502" y="374.2" width="16" height="20.8" fill="#808080"/><rect x="1518" y="388.0" width="16" height="7.0" fill="#c3c9d1"/><rect x="1534" y="339.2" width="16" height="48.8" fill="#1e90ff"/><rect x="1550" y="339.2" width="16" height="23.2" fill="#808080"/><rect x="1566" y="358.0" width="16" height="5.0" fill="#c3c9d1"/><rect x="1582" y="358.0" width="16" height="20.8" fill="#808080"/><rect x="1598" y="358.8" width="16" height="18.2" fill="#c3c9d1"/><rect x="1614" y="357.0" width="16" height="8.0" fill="#808080"/><rect x="1630" y="365.0" width="16" height="13.8" fill="#808080"/><rect x="1646" y="374.2" width="16" height="2.8" fill="#c3c9d1"/><rect x="1662" y="376.2" width="16" height="14.5" fill="#808080"/><rect x="1678" y="388.8" width="16" height="4.2" fill="#808080"/><rect x="1694" y="370.1" width="16" height="20.5" fill="#c3c9d1"/><rect x="1710" y="336.1" width="16" height="33.6" fill="#1e90ff"/><rect x="1726" y="335.4" width="16" height="20.2" fill="#808080"/><rect x="1742" y="353.1" width="16" height="19.4" fill="#808080"/><rect x="1758" y="370.1" width="16" height="2.0" fill="#c3c9d1"/><rect x="1774" y="371.9" width="16" height="20.8" fill="#808080"/><rect x="1790" y="386.4" width="16" height="7.1" fill="#c3c9d1"/><rect x="1806" y="386.4" width="16" height="12.0" fill="#808080"/><rect x="1822" y="391.3" width="16" height="5.0" fill="#c3c9d1"/><rect x="1838" y="392.0" width="16" height="7.1" fill="#808080"/><rect x="1854" y="397.4" width="16" height="5.9" fill="#c3c9d1"/></g>
<polyline points="358.0,201.8 390.0,192.5 422.0,183.8 438.0,179.2 454.0,173.0 470.0,170.5 486.0,167.0 518.0,157.5 550.0,152.5 566.0,147.5 582.0,138.8 598.0,125.0 614.0,117.5 646.0,115.0 678.0,112.0 710.0,113.8 726.0,117.5 758.0,128.8 790.0,142.5 822.0,153.8 838.0,162.5 854.0,171.2 870.0,180.0 886.0,188.8 902.0,195.0 918.0,200.0 934.0,204.5 950.0,205.0 966.0,206.2 982.0,210.0 998.0,212.0 1014.0,212.5 1030.0,213.8 1046.0,216.2 1062.0,220.0 1078.0,222.5 1094.0,223.0 1110.0,224.5 1126.0,227.0 1142.0,228.0 1158.0,228.8 1174.0,229.2 1190.0,231.2 1206.0,233.8 1222.0,235.5 1238.0,237.0 1254.0,240.0 1270.0,242.5 1286.0,244.5 1302.0,248.0 1318.0,248.8 1334.0,249.5 1350.0,253.8 1366.0,255.5 1382.0,257.5 1398.0,260.0 1414.0,262.5 1430.0,265.0 1446.0,269.5 1462.0,273.8 1478.0,277.5 1494.0,283.8 1510.0,290.0 1526.0,295.0 1542.0,298.0 1558.0,300.0 1574.0,303.8 1590.0,307.5 1606.0,310.0 1622.0,313.0 1638.0,317.0 1654.0,320.0 1670.0,323.8 1680.0,325.5 1685.7,328.3 1708.0,328.3 1714.0,326.6 1756.5,326.6 1763.5,325.2 1770.6,326.2 1779.0,328.3 1804.6,331.9 1823.0,334.7 1847.0,338.9 1860.5,341.8" fill="none" stroke="#e2b500" stroke-width="1" stroke-dasharray="3 3" shape-rendering="crispEdges"/>
<polyline points="402.0,317.5 421.0,309.0 438.5,302.0 456.0,299.0 466.0,294.0 486.0,289.5 502.0,282.5 518.5,275.0 535.0,269.5 551.0,265.0 568.5,261.0 581.0,257.5 598.5,250.0 613.5,240.0 631.0,236.0 646.0,232.0 678.5,225.5 695.0,224.0 711.0,225.0 726.0,226.0 758.5,232.5 791.0,239.0 823.5,245.0 838.0,249.5 854.0,253.8 870.0,265.0 886.0,272.5 902.0,278.8 918.0,282.5 934.0,285.0 950.0,287.0 966.0,289.5 982.0,292.0 998.0,294.5 1014.0,297.0 1030.0,298.8 1046.0,298.8 1062.0,298.8 1078.0,298.8 1094.0,298.8 1110.0,298.5 1126.0,298.8 1142.0,299.0 1158.0,300.0 1174.0,302.5 1190.0,302.8 1206.0,303.0 1222.0,304.0 1238.0,305.8 1254.0,307.8 1270.0,310.0 1286.0,313.0 1302.0,315.0 1318.0,318.0 1334.0,320.0 1350.0,320.0 1366.0,321.2 1382.0,323.2 1398.0,325.0 1414.0,326.2 1430.0,327.5 1446.0,332.5 1462.0,337.5 1478.0,341.2 1494.0,346.2 1510.0,353.8 1526.0,361.2 1542.0,366.2 1558.0,368.8 1574.0,372.0 1590.0,376.2 1606.0,380.0 1622.0,382.5 1638.0,386.2 1654.0,388.8 1680.0,396.3 1694.0,397.7 1708.0,400.5 1733.8,401.2 1748.0,404.8 1765.0,408.3 1779.0,410.2 1807.0,411.9 1828.7,415.0 1848.5,415.8" fill="none" stroke="#f0f0f0" stroke-width="1" stroke-dasharray="3 3" shape-rendering="crispEdges"/>
<polyline points="356.0,225.0 438.5,225.0 454.0,160.0 599.0,160.0 614.8,91.8 791.0,91.8 806.0,232.5 836.0,233.0 953.5,233.0 967.0,229.5 998.0,229.5 1014.0,238.8 1094.0,238.8 1110.0,245.0 1316.0,245.0 1350.0,244.5 1366.0,270.0 1526.2,270.0 1542.0,324.5 1590.0,324.5 1606.2,353.2 1702.5,353.2 1702.0,353.0 1719.0,334.0 1862.6,334.0" fill="none" stroke="#ffff00" stroke-width="2" stroke-linejoin="miter"/>
<polyline points="358.0,354.5 391.0,354.5 391.0,347.0 396.0,317.0 396.0,310.0 406.0,234.0 439.0,234.0 454.0,212.0 647.0,212.0 662.0,181.0 774.0,181.0 790.0,267.0 871.0,267.0 886.0,324.0 998.5,324.0 1014.0,273.0 1068.5,273.0 1080.0,271.0 1158.5,271.0 1174.0,293.0 1271.0,293.0 1286.0,325.5 1321.2,325.0 1335.0,320.0 1494.5,320.0 1510.0,400.0 1750.8,399.8 1765.0,406.2 1862.6,406.2" fill="none" stroke="#0000ff" stroke-width="2.1" />
<polyline points="358.0,266.0 390.0,259.0 406.0,251.0 438.5,241.0 486.0,229.0 518.5,218.0 551.0,209.5 568.5,204.5 582.0,197.5 614.0,181.2 646.0,173.8 662.0,170.5 694.0,168.8" fill="none" stroke="#00bfff" stroke-width="2.4" />
<polyline points="694.0,168.8 710.0,169.5 742.0,176.2 774.0,186.2 806.0,196.2 838.0,206.2 854.0,215.0 870.0,223.8 886.0,231.2 902.0,237.0 918.0,241.2 934.0,244.2 950.0,245.8 966.0,248.2 982.0,249.5 998.0,251.2 1014.0,252.5 1030.0,254.2 1046.0,256.8 1062.0,260.0 1078.0,261.5 1094.0,261.5 1110.0,261.5 1126.0,261.8 1142.0,262.5 1158.0,263.8 1174.0,265.0 1190.0,266.2 1206.0,268.8 1222.0,270.5 1238.0,272.5 1254.0,275.0 1270.0,277.0 1286.0,279.5 1302.0,282.5 1318.0,283.8 1334.0,285.0 1350.0,287.5 1366.0,289.2 1382.0,290.5 1398.0,292.5 1414.0,294.5 1430.0,296.2 1446.0,300.5 1462.0,304.5 1478.0,309.5 1494.0,314.5 1510.0,322.5 1526.0,329.5 1542.0,331.8 1558.0,335.0 1574.0,338.8 1590.0,342.5 1606.0,346.2 1622.0,348.8 1638.0,352.0 1654.0,355.0 1670.0,358.2 1686.0,362.0 1702.0,364.0 1718.0,364.0 1734.0,364.4 1750.0,365.4 1766.0,366.5 1782.0,369.4 1798.0,371.5 1814.0,373.3 1830.0,375.0 1846.0,378.3 1862.6,378.9" fill="none" stroke="#ff00ff" stroke-width="2.4" />
<polyline points="1702.0,364.0 1714.0,364.0" fill="none" stroke="#00bfff" stroke-width="2.4" />
<polyline points="358.0,235.0 374.0,217.5 390.0,211.2 406.0,202.0 422.0,191.2 438.0,183.8 454.0,183.8 470.0,186.2 486.0,190.0 502.0,185.0 518.0,180.0 534.0,176.2 550.0,170.5 566.0,169.5 582.0,155.0 598.0,127.5 614.0,109.5 630.0,117.5 646.0,137.5 662.0,156.2 678.0,170.0 694.0,178.8 710.0,192.5 726.0,205.0 742.0,217.5" fill="none" stroke="#0000ff" stroke-width="2.2" />
<polyline points="742.0,217.5 758.0,235.0 774.0,246.2 790.0,251.2 806.0,253.8 822.0,257.5 838.0,263.8 854.0,270.0 870.0,287.5 886.0,302.5 902.0,302.5 918.0,291.2 934.0,275.0 950.0,255.0 966.0,243.2 982.0,242.5 998.0,246.2 1014.0,247.5 1030.0,251.2 1046.0,256.2 1062.0,261.2 1078.0,262.5 1094.0,263.0 1110.0,264.5 1126.0,265.8 1142.0,266.2 1158.0,271.2 1174.0,277.0 1190.0,280.0 1206.0,283.0 1222.0,287.5 1238.0,290.5 1254.0,292.0 1270.0,297.5 1286.0,306.2 1302.0,311.2 1318.0,308.8 1334.0,303.8 1350.0,302.5 1366.0,300.0 1382.0,298.0 1398.0,301.2 1414.0,305.0 1430.0,312.5 1446.0,331.2 1462.0,342.5 1478.0,355.0 1494.0,372.5 1510.0,390.0 1526.0,394.5 1542.0,368.8 1558.0,359.5 1574.0,358.0 1590.0,364.5 1606.0,366.2 1622.0,365.0 1638.0,370.0 1654.0,375.0 1670.0,381.2 1686.0,386.7 1702.0,385.7 1718.0,360.9 1734.0,350.5 1750.0,356.0 1766.0,361.6 1782.0,377.2 1798.0,386.4 1814.0,392.7 1830.0,394.9 1846.0,398.0 1862.0,399.8" fill="none" stroke="#d6188c" stroke-width="2.2" />
<text x="363" y="108.7" font-family="Liberation Sans,sans-serif" font-weight="bold" font-size="13.5" fill="#0000b4" textLength="275" lengthAdjust="spacingAndGlyphs">© WWW.FXTRADINGREVOLUTION.COM</text>
<g fill="#00ff00"><circle cx="358.5" cy="354.5" r="3.7"/><circle cx="374.5" cy="350.0" r="3.7"/><circle cx="390.5" cy="344.0" r="3.7"/><circle cx="406.5" cy="338.0" r="3.7"/><circle cx="422.5" cy="332.5" r="3.7"/><circle cx="438.5" cy="327.0" r="3.7"/><circle cx="454.5" cy="317.5" r="3.7"/><circle cx="470.5" cy="306.0" r="3.7"/><circle cx="486.0" cy="293.5" r="3.7"/><circle cx="502.5" cy="282.0" r="3.7"/><circle cx="518.5" cy="273.0" r="3.7"/><circle cx="534.5" cy="264.5" r="3.7"/><circle cx="550.5" cy="255.0" r="3.7"/><circle cx="566.5" cy="248.5" r="3.7"/><circle cx="582.5" cy="237.5" r="3.7"/><circle cx="598.5" cy="224.0" r="3.7"/><circle cx="614.5" cy="205.0" r="3.7"/><circle cx="630.5" cy="187.5" r="3.7"/><circle cx="646.5" cy="172.5" r="3.7"/><circle cx="662.2" cy="92.0" r="3.7"/><circle cx="678.2" cy="93.0" r="3.7"/><circle cx="694.2" cy="95.5" r="3.7"/><circle cx="710.2" cy="97.0" r="3.7"/><circle cx="726.2" cy="101.5" r="3.7"/><circle cx="742.2" cy="109.5" r="3.7"/><circle cx="758.2" cy="119.2" r="3.7"/><circle cx="774.2" cy="131.5" r="3.7"/><circle cx="790.2" cy="146.2" r="3.7"/><circle cx="806.2" cy="163.0" r="3.7"/><circle cx="822.2" cy="178.2" r="3.7"/><circle cx="838.5" cy="190.5" r="3.7"/><circle cx="854.5" cy="203.0" r="3.7"/><circle cx="870.5" cy="217.0" r="3.7"/><circle cx="886.5" cy="235.5" r="3.7"/><circle cx="902.5" cy="253.0" r="3.7"/><circle cx="918.5" cy="324.5" r="3.7"/><circle cx="934.5" cy="323.0" r="3.7"/><circle cx="950.5" cy="320.0" r="3.7"/><circle cx="966.5" cy="315.0" r="3.7"/><circle cx="982.5" cy="308.0" r="3.7"/><circle cx="998.5" cy="302.5" r="3.7"/><circle cx="1014.5" cy="296.0" r="3.7"/><circle cx="1030.5" cy="292.0" r="3.7"/><circle cx="1046.5" cy="286.5" r="3.7"/><circle cx="1062.5" cy="281.0" r="3.7"/><circle cx="1078.5" cy="277.5" r="3.7"/><circle cx="1094.5" cy="273.0" r="3.7"/><circle cx="1110.5" cy="271.0" r="3.7"/><circle cx="1126.5" cy="230.0" r="3.7"/><circle cx="1142.5" cy="231.0" r="3.7"/><circle cx="1158.5" cy="232.0" r="3.7"/><circle cx="1174.5" cy="234.5" r="3.7"/><circle cx="1190.5" cy="237.0" r="3.7"/><circle cx="1206.5" cy="242.0" r="3.7"/><circle cx="1222.5" cy="244.5" r="3.7"/><circle cx="1238.5" cy="249.0" r="3.7"/><circle cx="1254.5" cy="254.5" r="3.7"/><circle cx="1270.5" cy="259.0" r="3.7"/><circle cx="1286.5" cy="266.0" r="3.7"/><circle cx="1302.5" cy="274.0" r="3.7"/><circle cx="1318.5" cy="281.0" r="3.7"/><circle cx="1334.5" cy="287.0" r="3.7"/><circle cx="1350.5" cy="325.5" r="3.7"/><circle cx="1366.5" cy="324.5" r="3.7"/><circle cx="1382.5" cy="322.5" r="3.7"/><circle cx="1398.5" cy="320.0" r="3.7"/><circle cx="1414.5" cy="270.5" r="3.7"/><circle cx="1430.5" cy="271.0" r="3.7"/><circle cx="1446.5" cy="272.0" r="3.7"/><circle cx="1462.5" cy="276.5" r="3.7"/><circle cx="1478.5" cy="279.5" r="3.7"/><circle cx="1494.5" cy="284.5" r="3.7"/><circle cx="1510.5" cy="292.5" r="3.7"/><circle cx="1526.5" cy="304.0" r="3.7"/><circle cx="1542.5" cy="312.5" r="3.7"/><circle cx="1558.5" cy="321.0" r="3.7"/><circle cx="1574.5" cy="324.5" r="3.7"/><circle cx="1590.5" cy="332.5" r="3.7"/><circle cx="1606.5" cy="339.5" r="3.7"/><circle cx="1622.5" cy="345.5" r="3.7"/><circle cx="1638.5" cy="350.0" r="3.7"/><circle cx="1654.5" cy="355.0" r="3.7"/><circle cx="1670.5" cy="359.5" r="3.7"/><circle cx="1686.5" cy="363.0" r="3.7"/><circle cx="1702.4" cy="400.5" r="3.7"/><circle cx="1718.4" cy="400.5" r="3.7"/><circle cx="1734.4" cy="398.4" r="3.7"/><circle cx="1750.4" cy="334.4" r="3.7"/><circle cx="1766.4" cy="335.4" r="3.7"/><circle cx="1782.4" cy="338.5" r="3.7"/><circle cx="1798.4" cy="341.5" r="3.7"/><circle cx="1814.4" cy="343.5" r="3.7"/><circle cx="1830.4" cy="346.4" r="3.7"/><circle cx="1846.4" cy="348.6" r="3.7"/><circle cx="1862.4" cy="351.4" r="3.7"/></g>
<circle cx="1494.5" cy="375.5" r="5.2" fill="#00ff00"/>
<circle cx="358" cy="294" r="8" fill="#1e90ff"/>
<circle cx="949.8" cy="272.5" r="8.5" fill="#1e90ff"/>
<circle cx="709.5" cy="157.5" r="8.7" fill="#ff00ff"/>
<circle cx="1125.5" cy="249.5" r="8.5" fill="#ff00ff"/>
<circle cx="662.3" cy="177.5" r="4.6" fill="#ff0000"/>
<path d="M758.5 181V194M752.800 187L758.500 194.600L764.200 187" stroke="#ff00ff" stroke-width="3" fill="none"/>
<path d="M605 136L620 146" stroke="#30a8ff" stroke-width="1" stroke-dasharray="3 3"/>
<circle cx="598" cy="130" r="6.400" fill="#1e90ff" stroke="#ffffff" stroke-width="1.400"/><path d="M593.800 132.300L598 126.800L602.200 132.300Z" fill="#fff"/>
<rect x="600" y="146" width="60" height="15.500" rx="3" fill="#c46b73"/>
<text x="605.5" y="157" font-family="Liberation Sans,sans-serif" font-size="10.500" fill="#ffffff" textLength="50" lengthAdjust="spacingAndGlyphs">Buy -146$</text>
<circle cx="1462" cy="347.500" r="6.400" fill="#ff4500" stroke="#ffffff" stroke-width="1.400"/><path d="M1457.800 345.400L1462 350.900L1466.200 345.400Z" fill="#fff"/>
<rect x="1453.500" y="354.5" width="49.500" height="14.500" rx="3" fill="#5f9562"/>
<text x="1456.5" y="364.7" font-family="Liberation Sans,sans-serif" font-size="10.500" fill="#ffffff" textLength="44" lengthAdjust="spacingAndGlyphs">Sell +86$</text>
<rect x="363.5" y="317.5" width="38" height="23" fill="#262626" stroke="#8a8a8a" shape-rendering="crispEdges"/>
<text x="372.500" y="334" font-family="Liberation Sans,sans-serif" font-size="13" fill="#9c9c9c" textLength="19.500" lengthAdjust="spacingAndGlyphs">ON</text>
<text x="1784" y="388.5" font-family="Liberation Sans,sans-serif" font-weight="bold" font-size="17.3" fill="#b4aca4" textLength="52.500" lengthAdjust="spacingAndGlyphs">XU-13</text>
<text x="1755.8" y="406.8" font-family="Liberation Sans,sans-serif" font-weight="bold" font-size="15" fill="#b4aca4" textLength="107" lengthAdjust="spacingAndGlyphs">Xard Universe</text>
<path d="M1604.800 75H1614.200L1609.500 80Z" fill="#a40000"/>
</g>
<path d="M361 81H368L364.5 85.3Z" fill="#c8c8c8"/>
 <text x="373.2" y="86" font-family="Liberation Sans,sans-serif" font-size="10" fill="#c8c8c8" textLength="58.5" lengthAdjust="spacingAndGlyphs">XAUUSDz,M1</text>
<text x="1873.6" y="86.9" font-family="Liberation Sans,sans-serif" font-size="9.4" fill="#c8c8c8" textLength="37.5" lengthAdjust="spacingAndGlyphs">1923.535</text>
<text x="1873.6" y="119.9" font-family="Liberation Sans,sans-serif" font-size="9.4" fill="#c8c8c8" textLength="37.5" lengthAdjust="spacingAndGlyphs">1923.010</text>
<text x="1873.6" y="152.9" font-family="Liberation Sans,sans-serif" font-size="9.4" fill="#c8c8c8" textLength="37.5" lengthAdjust="spacingAndGlyphs">1922.485</text>
<text x="1873.6" y="185.9" font-family="Liberation Sans,sans-serif" font-size="9.4" fill="#c8c8c8" textLength="37.5" lengthAdjust="spacingAndGlyphs">1921.960</text>
<text x="1873.6" y="218.9" font-family="Liberation Sans,sans-serif" font-size="9.4" fill="#c8c8c8" textLength="37.5" lengthAdjust="spacingAndGlyphs">1921.435</text>
<text x="1873.6" y="251.9" font-family="Liberation Sans,sans-serif" font-size="9.4" fill="#c8c8c8" textLength="37.5" lengthAdjust="spacingAndGlyphs">1920.910</text>
<text x="1873.6" y="284.9" font-family="Liberation Sans,sans-serif" font-size="9.4" fill="#c8c8c8" textLength="37.5" lengthAdjust="spacingAndGlyphs">1920.385</text>
<text x="1873.6" y="317.9" font-family="Liberation Sans,sans-serif" font-size="9.4" fill="#c8c8c8" textLength="37.5" lengthAdjust="spacingAndGlyphs">1919.860</text>
<text x="1873.6" y="350.9" font-family="Liberation Sans,sans-serif" font-size="9.4" fill="#c8c8c8" textLength="37.5" lengthAdjust="spacingAndGlyphs">1919.335</text>
<text x="1873.6" y="383.9" font-family="Liberation Sans,sans-serif" font-size="9.4" fill="#c8c8c8" textLength="37.5" lengthAdjust="spacingAndGlyphs">1918.810</text>
<text x="1873.6" y="416.9" font-family="Liberation Sans,sans-serif" font-size="9.4" fill="#c8c8c8" textLength="37.5" lengthAdjust="spacingAndGlyphs">1918.285</text>
<g clip-path="url(#ci)">
<g shape-rendering="crispEdges">
<path d="M358 484.500H1867M358 607.500H1867" stroke="#ffff00" stroke-dasharray="3 3"/>
<path d="M358 546.500H1867" stroke="#909090" stroke-dasharray="3 3"/>
<rect x="372" y="545.5" width="5" height="1.0" fill="#0000ff"/>
<rect x="388" y="542.2" width="5" height="4.2" fill="#0000ff"/>
<rect x="404" y="538.5" width="5" height="8.0" fill="#0000ff"/>
<rect x="420" y="536.5" width="5" height="10.0" fill="#0000ff"/>
<rect x="436" y="534.0" width="5" height="12.5" fill="#0000ff"/>
<rect x="452" y="534.0" width="5" height="12.5" fill="#0000ff"/>
<rect x="468" y="533.0" width="5" height="13.5" fill="#0000ff"/>
<rect x="484" y="534.0" width="5" height="12.5" fill="#0000ff"/>
<rect x="500" y="533.0" width="5" height="13.5" fill="#0000ff"/>
<rect x="516" y="533.0" width="5" height="13.5" fill="#0000ff"/>
<rect x="532" y="533.0" width="5" height="13.5" fill="#0000ff"/>
<rect x="548" y="533.0" width="5" height="13.5" fill="#0000ff"/>
<rect x="564" y="533.0" width="5" height="13.5" fill="#0000ff"/>
<rect x="580" y="531.8" width="5" height="14.8" fill="#0000ff"/>
<rect x="596" y="529.8" width="5" height="16.8" fill="#0000ff"/>
<rect x="612" y="528.5" width="5" height="18.0" fill="#0000ff"/>
<rect x="628" y="529.8" width="5" height="16.8" fill="#0000ff"/>
<rect x="644" y="531.0" width="5" height="15.5" fill="#0000ff"/>
<rect x="660" y="533.0" width="5" height="13.5" fill="#0000ff"/>
<rect x="676" y="534.8" width="5" height="11.8" fill="#0000ff"/>
<rect x="692" y="536.8" width="5" height="9.8" fill="#0000ff"/>
<rect x="708" y="540.2" width="5" height="6.2" fill="#0000ff"/>
<rect x="724" y="543.5" width="5" height="3.0" fill="#0000ff"/>
<rect x="756" y="546.5" width="5" height="2.5" fill="#ff0000"/>
<rect x="772" y="546.5" width="5" height="4.5" fill="#ff0000"/>
<rect x="788" y="546.5" width="5" height="6.5" fill="#ff0000"/>
<rect x="804" y="546.5" width="5" height="8.2" fill="#ff0000"/>
<rect x="820" y="546.5" width="5" height="9.5" fill="#ff0000"/>
<rect x="836" y="546.5" width="5" height="10.8" fill="#ff0000"/>
<rect x="852" y="546.5" width="5" height="12.5" fill="#ff0000"/>
<rect x="868" y="546.5" width="5" height="14.0" fill="#ff0000"/>
<rect x="884" y="546.5" width="5" height="15.8" fill="#ff0000"/>
<rect x="900" y="546.5" width="5" height="14.5" fill="#ff0000"/>
<rect x="916" y="546.5" width="5" height="13.8" fill="#ff0000"/>
<rect x="932" y="546.5" width="5" height="12.5" fill="#ff0000"/>
<rect x="948" y="546.5" width="5" height="9.5" fill="#ff0000"/>
<rect x="964" y="546.5" width="5" height="7.8" fill="#ff0000"/>
<rect x="980" y="546.5" width="5" height="6.5" fill="#ff0000"/>
<rect x="996" y="546.5" width="5" height="4.5" fill="#ff0000"/>
<rect x="1012" y="546.5" width="5" height="3.2" fill="#ff0000"/>
<rect x="1028" y="546.5" width="5" height="2.5" fill="#ff0000"/>
<rect x="1044" y="546.5" width="5" height="2.5" fill="#ff0000"/>
<rect x="1060" y="546.5" width="5" height="3.8" fill="#ff0000"/>
<rect x="1076" y="546.5" width="5" height="3.8" fill="#ff0000"/>
<rect x="1092" y="546.5" width="5" height="3.8" fill="#ff0000"/>
<rect x="1108" y="546.5" width="5" height="3.8" fill="#ff0000"/>
<rect x="1124" y="546.5" width="5" height="4.5" fill="#ff0000"/>
<rect x="1140" y="546.5" width="5" height="4.5" fill="#ff0000"/>
<rect x="1156" y="546.5" width="5" height="4.5" fill="#ff0000"/>
<rect x="1172" y="546.5" width="5" height="5.8" fill="#ff0000"/>
<rect x="1188" y="546.5" width="5" height="5.8" fill="#ff0000"/>
<rect x="1204" y="546.5" width="5" height="5.8" fill="#ff0000"/>
<rect x="1220" y="546.5" width="5" height="7.0" fill="#ff0000"/>
<rect x="1236" y="546.5" width="5" height="7.0" fill="#ff0000"/>
<rect x="1252" y="546.5" width="5" height="7.0" fill="#ff0000"/>
<rect x="1268" y="546.5" width="5" height="7.5" fill="#ff0000"/>
<rect x="1284" y="546.5" width="5" height="8.8" fill="#ff0000"/>
<rect x="1300" y="546.5" width="5" height="8.8" fill="#ff0000"/>
<rect x="1316" y="546.5" width="5" height="8.2" fill="#ff0000"/>
<rect x="1332" y="546.5" width="5" height="7.5" fill="#ff0000"/>
<rect x="1348" y="546.5" width="5" height="7.5" fill="#ff0000"/>
<rect x="1364" y="546.5" width="5" height="7.0" fill="#ff0000"/>
<rect x="1380" y="546.5" width="5" height="7.0" fill="#ff0000"/>
<rect x="1396" y="546.5" width="5" height="7.0" fill="#ff0000"/>
<rect x="1412" y="546.5" width="5" height="7.0" fill="#ff0000"/>
<rect x="1428" y="546.5" width="5" height="7.0" fill="#ff0000"/>
<rect x="1444" y="546.5" width="5" height="8.8" fill="#ff0000"/>
<rect x="1460" y="546.5" width="5" height="10.0" fill="#ff0000"/>
<rect x="1476" y="546.5" width="5" height="10.8" fill="#ff0000"/>
<rect x="1492" y="546.5" width="5" height="12.5" fill="#ff0000"/>
<rect x="1508" y="546.5" width="5" height="14.5" fill="#ff0000"/>
<rect x="1524" y="546.5" width="5" height="16.5" fill="#ff0000"/>
<rect x="1540" y="546.5" width="5" height="15.2" fill="#ff0000"/>
<rect x="1556" y="546.5" width="5" height="15.2" fill="#ff0000"/>
<rect x="1572" y="546.5" width="5" height="14.5" fill="#ff0000"/>
<rect x="1588" y="546.5" width="5" height="14.5" fill="#ff0000"/>
<rect x="1604" y="546.5" width="5" height="13.8" fill="#ff0000"/>
<rect x="1620" y="546.5" width="5" height="12.8" fill="#ff0000"/>
<rect x="1636" y="546.5" width="5" height="12.8" fill="#ff0000"/>
<rect x="1652" y="546.5" width="5" height="12.0" fill="#ff0000"/>
<rect x="1668" y="546.5" width="5" height="12.8" fill="#ff0000"/>
<rect x="1684" y="546.5" width="5" height="12.8" fill="#ff0000"/>
<rect x="1700" y="546.5" width="5" height="12.8" fill="#ff0000"/>
<rect x="1716" y="546.5" width="5" height="10.2" fill="#ff0000"/>
<rect x="1732" y="546.5" width="5" height="8.8" fill="#ff0000"/>
<rect x="1748" y="546.5" width="5" height="8.2" fill="#ff0000"/>
<rect x="1764" y="546.5" width="5" height="7.5" fill="#ff0000"/>
<rect x="1780" y="546.5" width="5" height="8.8" fill="#ff0000"/>
<rect x="1796" y="546.5" width="5" height="8.3" fill="#ff0000"/>
<rect x="1812" y="546.5" width="5" height="8.3" fill="#ff0000"/>
<rect x="1828" y="546.5" width="5" height="9.5" fill="#ff0000"/>
<rect x="1844" y="546.5" width="5" height="10.7" fill="#ff0000"/>
<rect x="1860" y="546.5" width="5" height="12.4" fill="#ff0000"/>
</g>
<polyline points="358.0,546.2 374.0,545.5 390.0,542.2 406.0,538.5 422.0,536.5 438.0,534.0 454.0,534.0 470.0,533.0 486.0,534.0 502.0,533.0 518.0,533.0 534.0,533.0 550.0,533.0 566.0,533.0 582.0,531.8 598.0,529.8 614.0,528.5 630.0,529.8 646.0,531.0 662.0,533.0 678.0,534.8 694.0,536.8 710.0,540.2 726.0,543.5 742.0,547.0 758.0,549.0 774.0,551.0 790.0,553.0 806.0,554.8 822.0,556.0 838.0,557.2 854.0,559.0 870.0,560.5 886.0,562.2 902.0,561.0 918.0,560.2 934.0,559.0 950.0,556.0 966.0,554.2 982.0,553.0 998.0,551.0 1014.0,549.8 1030.0,549.0 1046.0,549.0 1062.0,550.2 1078.0,550.2 1094.0,550.2 1110.0,550.2 1126.0,551.0 1142.0,551.0 1158.0,551.0 1174.0,552.2 1190.0,552.2 1206.0,552.2 1222.0,553.5 1238.0,553.5 1254.0,553.5 1270.0,554.0 1286.0,555.2 1302.0,555.2 1318.0,554.8 1334.0,554.0 1350.0,554.0 1366.0,553.5 1382.0,553.5 1398.0,553.5 1414.0,553.5 1430.0,553.5 1446.0,555.2 1462.0,556.5 1478.0,557.2 1494.0,559.0 1510.0,561.0 1526.0,563.0 1542.0,561.8 1558.0,561.8 1574.0,561.0 1590.0,561.0 1606.0,560.2 1622.0,559.2 1638.0,559.2 1654.0,558.5 1670.0,559.2 1686.0,559.2 1702.0,559.2 1718.0,556.8 1734.0,555.2 1750.0,554.8 1766.0,554.0 1782.0,555.3 1798.0,554.8 1814.0,554.8 1830.0,556.0 1846.0,557.2 1862.0,558.9" fill="none" stroke="#808080" stroke-width="1" />
<polyline points="358.0,462.2 374.0,496.0 390.0,531.0 406.0,471.5 422.0,470.2 438.0,460.5 454.0,564.8 470.0,574.0 486.0,603.5 502.0,466.5 518.0,524.8 534.0,504.8 550.0,475.2 566.0,526.8 582.0,454.2 598.0,448.0 614.0,491.0 630.0,602.2 646.0,618.0 662.0,630.5 678.0,591.5 694.0,600.2 710.0,639.0 726.0,643.0 742.0,645.5 758.0,647.2 774.0,648.5 790.0,596.5 806.0,609.0 822.0,634.8 838.0,643.5 854.0,623.5 870.0,644.0 886.0,622.2 902.0,510.5 918.0,472.2 934.0,463.5 950.0,451.8 966.0,538.5 982.0,566.0 998.0,599.2 1014.0,496.5 1030.0,589.2 1046.0,553.5 1062.0,601.0 1078.0,511.5 1094.0,565.5 1110.0,565.5 1126.0,619.0 1142.0,517.2 1158.0,607.2 1174.0,553.0 1190.0,581.0 1206.0,604.8 1222.0,633.0 1238.0,523.5 1254.0,586.0 1270.0,618.5 1286.0,627.2 1302.0,576.0 1318.0,486.5 1334.0,484.8 1350.0,584.0 1366.0,494.8 1382.0,543.5 1398.0,615.2 1414.0,554.2 1430.0,614.8 1446.0,640.2 1462.0,599.8 1478.0,629.2 1494.0,637.2 1510.0,644.2 1526.0,586.0 1542.0,471.5 1558.0,547.2 1574.0,541.0 1590.0,600.5 1606.0,516.8 1622.0,546.0 1638.0,603.5 1654.0,561.5 1670.0,619.2 1686.0,623.5 1702.0,485.7 1718.0,456.4 1734.0,540.4 1750.0,588.9 1766.0,572.8 1782.0,623.2 1798.0,574.7 1814.0,611.2 1830.0,554.8 1846.0,606.4 1862.0,558.4" fill="none" stroke="#1e90ff" stroke-width="1" />
<path d="M358 643.500L363.500 649H358Z" fill="#a80000"/>
</g>
 <text x="362.3" y="455" font-family="Liberation Sans,sans-serif" font-size="9.4" fill="#c8c8c8" textLength="62.5" lengthAdjust="spacingAndGlyphs">RSI(2) 23.3009</text>
<text x="1871.3" y="453.4" font-family="Liberation Sans,sans-serif" font-size="9.6" fill="#c8c8c8">100</text>
<text x="1871.3" y="487.9" font-family="Liberation Sans,sans-serif" font-size="9.6" fill="#c8c8c8">80</text>
<path d="M1868 484.5H1871" stroke="#b4b4b4" shape-rendering="crispEdges"/>
<text x="1871.3" y="550.4" font-family="Liberation Sans,sans-serif" font-size="9.6" fill="#c8c8c8">0</text>
<path d="M1868 547H1871" stroke="#b4b4b4" shape-rendering="crispEdges"/>
<text x="1871.3" y="610.9" font-family="Liberation Sans,sans-serif" font-size="9.6" fill="#c8c8c8">20</text>
<path d="M1868 607.5H1871" stroke="#b4b4b4" shape-rendering="crispEdges"/>
<text x="1871.3" y="645.9" font-family="Liberation Sans,sans-serif" font-size="9.6" fill="#c8c8c8">0</text>
<path d="M358.5 650V653" stroke="#b4b4b4" shape-rendering="crispEdges"/>
<text x="357.5" y="662" font-family="Liberation Sans,sans-serif" font-size="9.4" fill="#c8c8c8" textLength="51.5" lengthAdjust="spacingAndGlyphs">16 Mar 2022</text>
<path d="M422.5 650V653" stroke="#b4b4b4" shape-rendering="crispEdges"/>
<text x="421.5" y="662" font-family="Liberation Sans,sans-serif" font-size="9.4" fill="#c8c8c8" textLength="54.5" lengthAdjust="spacingAndGlyphs">16 Mar 02:21</text>
<path d="M486.5 650V653" stroke="#b4b4b4" shape-rendering="crispEdges"/>
<text x="485.5" y="662" font-family="Liberation Sans,sans-serif" font-size="9.4" fill="#c8c8c8" textLength="54.5" lengthAdjust="spacingAndGlyphs">16 Mar 02:25</text>
<path d="M550.5 650V653" stroke="#b4b4b4" shape-rendering="crispEdges"/>
<text x="549.5" y="662" font-family="Liberation Sans,sans-serif" font-size="9.4" fill="#c8c8c8" textLength="54.5" lengthAdjust="spacingAndGlyphs">16 Mar 02:29</text>
<path d="M614.5 650V653" stroke="#b4b4b4" shape-rendering="crispEdges"/>
<text x="613.5" y="662" font-family="Liberation Sans,sans-serif" font-size="9.4" fill="#c8c8c8" textLength="54.5" lengthAdjust="spacingAndGlyphs">16 Mar 02:33</text>
<path d="M678.5 650V653" stroke="#b4b4b4" shape-rendering="crispEdges"/>
<text x="677.5" y="662" font-family="Liberation Sans,sans-serif" font-size="9.4" fill="#c8c8c8" textLength="54.5" lengthAdjust="spacingAndGlyphs">16 Mar 02:37</text>
<path d="M742.5 650V653" stroke="#b4b4b4" shape-rendering="crispEdges"/>
<text x="741.5" y="662" font-family="Liberation Sans,sans-serif" font-size="9.4" fill="#c8c8c8" textLength="54.5" lengthAdjust="spacingAndGlyphs">16 Mar 02:41</text>
<path d="M806.5 650V653" stroke="#b4b4b4" shape-rendering="crispEdges"/>
<text x="805.5" y="662" font-family="Liberation Sans,sans-serif" font-size="9.4" fill="#c8c8c8" textLength="54.5" lengthAdjust="spacingAndGlyphs">16 Mar 02:45</text>
<path d="M870.5 650V653" stroke="#b4b4b4" shape-rendering="crispEdges"/>
<text x="869.5" y="662" font-family="Liberation Sans,sans-serif" font-size="9.4" fill="#c8c8c8" textLength="54.5" lengthAdjust="spacingAndGlyphs">16 Mar 02:49</text>
<path d="M934.5 650V653" stroke="#b4b4b4" shape-rendering="crispEdges"/>
<text x="933.5" y="662" font-family="Liberation Sans,sans-serif" font-size="9.4" fill="#c8c8c8" textLength="54.5" lengthAdjust="spacingAndGlyphs">16 Mar 02:53</text>
<path d="M998.5 650V653" stroke="#b4b4b4" shape-rendering="crispEdges"/>
<text x="997.5" y="662" font-family="Liberation Sans,sans-serif" font-size="9.4" fill="#c8c8c8" textLength="54.5" lengthAdjust="spacingAndGlyphs">16 Mar 02:57</text>
<path d="M1062.5 650V653" stroke="#b4b4b4" shape-rendering="crispEdges"/>
<text x="1061.5" y="662" font-family="Liberation Sans,sans-serif" font-size="9.4" fill="#c8c8c8" textLength="54.5" lengthAdjust="spacingAndGlyphs">16 Mar 03:01</text>
<path d="M1126.5 650V653" stroke="#b4b4b4" shape-rendering="crispEdges"/>
<text x="1125.5" y="662" font-family="Liberation Sans,sans-serif" font-size="9.4" fill="#c8c8c8" textLength="54.5" lengthAdjust="spacingAndGlyphs">16 Mar 03:05</text>
<path d="M1190.5 650V653" stroke="#b4b4b4" shape-rendering="crispEdges"/>
<text x="1189.5" y="662" font-family="Liberation Sans,sans-serif" font-size="9.4" fill="#c8c8c8" textLength="54.5" lengthAdjust="spacingAndGlyphs">16 Mar 03:09</text>
<path d="M1254.5 650V653" stroke="#b4b4b4" shape-rendering="crispEdges"/>
<text x="1253.5" y="662" font-family="Liberation Sans,sans-serif" font-size="9.4" fill="#c8c8c8" textLength="54.5" lengthAdjust="spacingAndGlyphs">16 Mar 03:13</text>
<path d="M1318.5 650V653" stroke="#b4b4b4" shape-rendering="crispEdges"/>
<text x="1317.5" y="662" font-family="Liberation Sans,sans-serif" font-size="9.4" fill="#c8c8c8" textLength="54.5" lengthAdjust="spacingAndGlyphs">16 Mar 03:17</text>
<path d="M1382.5 650V653" stroke="#b4b4b4" shape-rendering="crispEdges"/>
<text x="1381.5" y="662" font-family="Liberation Sans,sans-serif" font-size="9.4" fill="#c8c8c8" textLength="54.5" lengthAdjust="spacingAndGlyphs">16 Mar 03:21</text>
<path d="M1446.5 650V653" stroke="#b4b4b4" shape-rendering="crispEdges"/>
<text x="1445.5" y="662" font-family="Liberation Sans,sans-serif" font-size="9.4" fill="#c8c8c8" textLength="54.5" lengthAdjust="spacingAndGlyphs">16 Mar 03:25</text>
<path d="M1510.5 650V653" stroke="#b4b4b4" shape-rendering="crispEdges"/>
<text x="1509.5" y="662" font-family="Liberation Sans,sans-serif" font-size="9.4" fill="#c8c8c8" textLength="54.5" lengthAdjust="spacingAndGlyphs">16 Mar 03:29</text>
<path d="M1574.5 650V653" stroke="#b4b4b4" shape-rendering="crispEdges"/>
<text x="1573.5" y="662" font-family="Liberation Sans,sans-serif" font-size="9.4" fill="#c8c8c8" textLength="54.5" lengthAdjust="spacingAndGlyphs">16 Mar 03:33</text>
<path d="M1638.5 650V653" stroke="#b4b4b4" shape-rendering="crispEdges"/>
<text x="1637.5" y="662" font-family="Liberation Sans,sans-serif" font-size="9.4" fill="#c8c8c8" textLength="54.5" lengthAdjust="spacingAndGlyphs">16 Mar 03:37</text>
<path d="M1702.5 650V653" stroke="#b4b4b4" shape-rendering="crispEdges"/>
<text x="1701.5" y="662" font-family="Liberation Sans,sans-serif" font-size="9.4" fill="#c8c8c8" textLength="54.5" lengthAdjust="spacingAndGlyphs">16 Mar 03:41</text>
<path d="M1766.5 650V653" stroke="#b4b4b4" shape-rendering="crispEdges"/>
<text x="1765.5" y="662" font-family="Liberation Sans,sans-serif" font-size="9.4" fill="#c8c8c8" textLength="54.5" lengthAdjust="spacingAndGlyphs">16 Mar 03:45</text>
<path d="M1830.5 650V653" stroke="#b4b4b4" shape-rendering="crispEdges"/>
<text x="1829.5" y="662" font-family="Liberation Sans,sans-serif" font-size="9.4" fill="#c8c8c8" textLength="54.5" lengthAdjust="spacingAndGlyphs">16 Mar 03:49</text>
</svg>
<div style="position:absolute;left:0px;top:672px;width:1920px;height:345px;background:#f0f0f0;"></div>
<div style="position:absolute;left:1px;top:689px;width:13px;height:324px;background:linear-gradient(#b0c8e8,#9db6da);"></div>
<svg style="position:absolute;left:3px;top:677px" width="8" height="8" viewBox="0 0 8 8"><path d="M1.300 1.300L6.700 6.700M6.700 1.300L1.300 6.700" stroke="#111" stroke-width="1.600"/></svg>
<div style="position:absolute;left:1.5px;top:1011px;width:40px;height:13px;line-height:13px;font-size:11.5px;color:#000;transform-origin:0 0;transform:rotate(-90deg) scaleX(.93);white-space:pre">Tester</div>
<div style="position:absolute;left:0px;top:1013px;width:1920px;height:1px;background:#b8b8b8;"></div>
<div style="position:absolute;left:0px;top:1014px;width:1920px;height:3px;background:#e6e6e6;"></div>
<div style="position:absolute;left:0px;top:670px;width:1920px;height:1px;background:#b8b8b8;"></div>
<div style="position:absolute;left:15px;top:675px;width:1902px;height:317px;background:#ffffff;border:1px solid #a8a8a8;border-bottom:none;box-sizing:border-box;"></div>
<svg style="position:absolute;left:0;top:672px" width="1920" height="345" viewBox="0 672 1920 345">
<g shape-rendering="crispEdges">
<path d="M52.5 681V915M52.5 918V974M84.5 681V915M84.5 918V974M116.5 681V915M116.5 918V974M148.5 681V915M148.5 918V974M180.5 681V915M180.5 918V974M212.5 681V915M212.5 918V974M244.5 681V915M244.5 918V974M276.5 681V915M276.5 918V974M308.5 681V915M308.5 918V974M340.5 681V915M340.5 918V974M372.5 681V915M372.5 918V974M404.5 681V915M404.5 918V974M436.5 681V915M436.5 918V974M468.5 681V915M468.5 918V974M500.5 681V915M500.5 918V974M532.5 681V915M532.5 918V974M564.5 681V915M564.5 918V974M596.5 681V915M596.5 918V974M628.5 681V915M628.5 918V974M660.5 681V915M660.5 918V974M692.5 681V915M692.5 918V974M724.5 681V915M724.5 918V974M756.5 681V915M756.5 918V974M788.5 681V915M788.5 918V974M820.5 681V915M820.5 918V974M852.5 681V915M852.5 918V974M884.5 681V915M884.5 918V974M916.5 681V915M916.5 918V974M948.5 681V915M948.5 918V974M980.5 681V915M980.5 918V974M1012.5 681V915M1012.5 918V974M1044.5 681V915M1044.5 918V974M1076.5 681V915M1076.5 918V974M1108.5 681V915M1108.5 918V974M1140.5 681V915M1140.5 918V974M1172.5 681V915M1172.5 918V974M1204.5 681V915M1204.5 918V974M1236.5 681V915M1236.5 918V974M1268.5 681V915M1268.5 918V974M1300.5 681V915M1300.5 918V974M1332.5 681V915M1332.5 918V974M1364.5 681V915M1364.5 918V974M1396.5 681V915M1396.5 918V974M1428.5 681V915M1428.5 918V974M1460.5 681V915M1460.5 918V974M1492.5 681V915M1492.5 918V974M1524.5 681V915M1524.5 918V974M1556.5 681V915M1556.5 918V974M1588.5 681V915M1588.5 918V974M1620.5 681V915M1620.5 918V974M1652.5 681V915M1652.5 918V974M1684.5 681V915M1684.5 918V974M1716.5 681V915M1716.5 918V974M1748.5 681V915M1748.5 918V974M1780.5 681V915M1780.5 918V974M1812.5 681V915M1812.5 918V974M1844.5 681V915M1844.5 918V974" stroke="#c4c4c4" stroke-dasharray="3 3"/>
<path d="M21 690.5H1871M21 722.5H1871M21 754.5H1871M21 786.5H1871M21 818.5H1871M21 850.5H1871M21 882.5H1871" stroke="#c4c4c4" stroke-dasharray="3 3"/>
<rect x="20.500" y="680.500" width="1851" height="234.500" fill="none" stroke="#000"/>
<rect x="20.500" y="917.500" width="1851" height="57" fill="none" stroke="#000"/>
<rect x="37" y="958.5" width="1" height="14.5" fill="#00aa00"/>
<rect x="54" y="946.0" width="1" height="27.0" fill="#00aa00"/>
<rect x="71" y="944.0" width="1" height="29.0" fill="#00aa00"/>
<rect x="88" y="942.0" width="1" height="31.0" fill="#00aa00"/>
<rect x="105" y="944.0" width="1" height="29.0" fill="#00aa00"/>
<rect x="122" y="944.0" width="1" height="29.0" fill="#00aa00"/>
<rect x="139" y="946.0" width="1" height="27.0" fill="#00aa00"/>
<rect x="156" y="947.0" width="1" height="26.0" fill="#00aa00"/>
<rect x="173" y="949.0" width="1" height="24.0" fill="#00aa00"/>
<rect x="190" y="951.0" width="1" height="22.0" fill="#00aa00"/>
<rect x="207" y="953.0" width="1" height="20.0" fill="#00aa00"/>
<rect x="224" y="953.0" width="1" height="20.0" fill="#00aa00"/>
<rect x="241" y="954.0" width="1" height="19.0" fill="#00aa00"/>
<rect x="258" y="953.0" width="1" height="20.0" fill="#00aa00"/>
<rect x="274" y="951.0" width="1" height="22.0" fill="#00aa00"/>
<rect x="291" y="947.0" width="1" height="26.0" fill="#00aa00"/>
<rect x="308" y="951.0" width="1" height="22.0" fill="#00aa00"/>
<rect x="325" y="949.0" width="1" height="24.0" fill="#00aa00"/>
<rect x="342" y="951.0" width="1" height="22.0" fill="#00aa00"/>
<rect x="359" y="925.0" width="1" height="48.0" fill="#00aa00"/>
<rect x="376" y="922.0" width="1" height="51.0" fill="#00aa00"/>
<rect x="393" y="929.0" width="1" height="44.0" fill="#00aa00"/>
<rect x="410" y="936.0" width="1" height="37.0" fill="#00aa00"/>
<rect x="427" y="936.0" width="1" height="37.0" fill="#00aa00"/>
<rect x="444" y="941.0" width="1" height="32.0" fill="#00aa00"/>
<rect x="461" y="949.0" width="1" height="24.0" fill="#00aa00"/>
<rect x="478" y="951.0" width="1" height="22.0" fill="#00aa00"/>
<rect x="495" y="936.0" width="1" height="37.0" fill="#00aa00"/>
<rect x="512" y="941.0" width="1" height="32.0" fill="#00aa00"/>
<rect x="529" y="939.0" width="1" height="34.0" fill="#00aa00"/>
<rect x="546" y="942.0" width="1" height="31.0" fill="#00aa00"/>
<rect x="563" y="946.0" width="1" height="27.0" fill="#00aa00"/>
<rect x="580" y="949.0" width="1" height="24.0" fill="#00aa00"/>
<rect x="597" y="941.0" width="1" height="32.0" fill="#00aa00"/>
<rect x="614" y="942.0" width="1" height="31.0" fill="#00aa00"/>
<rect x="631" y="942.0" width="1" height="31.0" fill="#00aa00"/>
<rect x="648" y="944.0" width="1" height="29.0" fill="#00aa00"/>
<rect x="665" y="942.0" width="1" height="31.0" fill="#00aa00"/>
<rect x="682" y="944.0" width="1" height="29.0" fill="#00aa00"/>
<rect x="699" y="944.0" width="1" height="29.0" fill="#00aa00"/>
<rect x="716" y="947.0" width="1" height="26.0" fill="#00aa00"/>
<rect x="733" y="949.0" width="1" height="24.0" fill="#00aa00"/>
<rect x="749" y="947.0" width="1" height="26.0" fill="#00aa00"/>
<rect x="766" y="949.0" width="1" height="24.0" fill="#00aa00"/>
<rect x="783" y="949.0" width="1" height="24.0" fill="#00aa00"/>
<rect x="800" y="942.0" width="1" height="31.0" fill="#00aa00"/>
<rect x="817" y="946.0" width="1" height="27.0" fill="#00aa00"/>
<rect x="834" y="945.0" width="1" height="28.0" fill="#00aa00"/>
<rect x="851" y="944.0" width="1" height="29.0" fill="#00aa00"/>
<rect x="868" y="947.0" width="1" height="26.0" fill="#00aa00"/>
<rect x="885" y="946.0" width="1" height="27.0" fill="#00aa00"/>
<rect x="902" y="947.0" width="1" height="26.0" fill="#00aa00"/>
<rect x="919" y="947.0" width="1" height="26.0" fill="#00aa00"/>
<rect x="936" y="949.0" width="1" height="24.0" fill="#00aa00"/>
<rect x="953" y="949.0" width="1" height="24.0" fill="#00aa00"/>
<rect x="970" y="949.0" width="1" height="24.0" fill="#00aa00"/>
<rect x="987" y="942.0" width="1" height="31.0" fill="#00aa00"/>
<rect x="1004" y="936.0" width="1" height="37.0" fill="#00aa00"/>
<rect x="1021" y="936.0" width="1" height="37.0" fill="#00aa00"/>
<rect x="1038" y="939.0" width="1" height="34.0" fill="#00aa00"/>
<rect x="1055" y="942.0" width="1" height="31.0" fill="#00aa00"/>
<rect x="1072" y="932.0" width="1" height="41.0" fill="#00aa00"/>
<rect x="1089" y="942.0" width="1" height="31.0" fill="#00aa00"/>
<rect x="1106" y="941.0" width="1" height="32.0" fill="#00aa00"/>
<rect x="1123" y="929.0" width="1" height="44.0" fill="#00aa00"/>
<rect x="1140" y="936.0" width="1" height="37.0" fill="#00aa00"/>
<rect x="1157" y="929.0" width="1" height="44.0" fill="#00aa00"/>
<rect x="1174" y="927.0" width="1" height="46.0" fill="#00aa00"/>
<rect x="1191" y="929.0" width="1" height="44.0" fill="#00aa00"/>
<rect x="1208" y="934.0" width="1" height="39.0" fill="#00aa00"/>
<rect x="1225" y="932.0" width="1" height="41.0" fill="#00aa00"/>
<rect x="1241" y="934.0" width="1" height="39.0" fill="#00aa00"/>
<rect x="1258" y="936.0" width="1" height="37.0" fill="#00aa00"/>
<rect x="1275" y="936.0" width="1" height="37.0" fill="#00aa00"/>
<rect x="1292" y="941.0" width="1" height="32.0" fill="#00aa00"/>
<rect x="1309" y="942.0" width="1" height="31.0" fill="#00aa00"/>
<rect x="1326" y="942.0" width="1" height="31.0" fill="#00aa00"/>
<rect x="1343" y="944.0" width="1" height="29.0" fill="#00aa00"/>
<rect x="1360" y="941.0" width="1" height="32.0" fill="#00aa00"/>
<rect x="1377" y="942.0" width="1" height="31.0" fill="#00aa00"/>
<rect x="1394" y="946.0" width="1" height="27.0" fill="#00aa00"/>
<rect x="1411" y="946.0" width="1" height="27.0" fill="#00aa00"/>
<rect x="1428" y="947.0" width="1" height="26.0" fill="#00aa00"/>
<rect x="1445" y="946.0" width="1" height="27.0" fill="#00aa00"/>
<rect x="1462" y="947.0" width="1" height="26.0" fill="#00aa00"/>
<rect x="1479" y="947.0" width="1" height="26.0" fill="#00aa00"/>
<rect x="1496" y="946.0" width="1" height="27.0" fill="#00aa00"/>
<rect x="1513" y="946.0" width="1" height="27.0" fill="#00aa00"/>
<rect x="1530" y="947.0" width="1" height="26.0" fill="#00aa00"/>
<rect x="1547" y="951.0" width="1" height="22.0" fill="#00aa00"/>
<rect x="1564" y="951.0" width="1" height="22.0" fill="#00aa00"/>
<rect x="1581" y="953.0" width="1" height="20.0" fill="#00aa00"/>
<rect x="1598" y="954.0" width="1" height="19.0" fill="#00aa00"/>
<rect x="1615" y="949.0" width="1" height="24.0" fill="#00aa00"/>
<rect x="1632" y="949.0" width="1" height="24.0" fill="#00aa00"/>
<rect x="1649" y="951.0" width="1" height="22.0" fill="#00aa00"/>
<rect x="1666" y="953.0" width="1" height="20.0" fill="#00aa00"/>
<rect x="1683" y="954.0" width="1" height="19.0" fill="#00aa00"/>
<rect x="1700" y="941.0" width="1" height="32.0" fill="#00aa00"/>
<rect x="1716" y="941.0" width="1" height="32.0" fill="#00aa00"/>
<rect x="1733" y="944.0" width="1" height="29.0" fill="#00aa00"/>
<rect x="1750" y="947.0" width="1" height="26.0" fill="#00aa00"/>
<rect x="1767" y="949.0" width="1" height="24.0" fill="#00aa00"/>
<rect x="1784" y="951.0" width="1" height="22.0" fill="#00aa00"/>
<rect x="1801" y="942.0" width="1" height="31.0" fill="#00aa00"/>
<rect x="1818" y="944.0" width="1" height="29.0" fill="#00aa00"/>
<rect x="1835" y="946.0" width="1" height="27.0" fill="#00aa00"/>
<rect x="1852" y="947.0" width="1" height="26.0" fill="#00aa00"/>
<rect x="1869" y="947.0" width="1" height="26.0" fill="#00aa00"/>
<path d="M52.5 975V977" stroke="#000"/>
<path d="M84.5 975V977" stroke="#000"/>
<path d="M116.5 975V977" stroke="#000"/>
<path d="M148.5 975V977" stroke="#000"/>
<path d="M180.5 975V977" stroke="#000"/>
<path d="M212.5 975V977" stroke="#000"/>
<path d="M244.5 975V977" stroke="#000"/>
<path d="M276.5 975V977" stroke="#000"/>
<path d="M308.5 975V977" stroke="#000"/>
<path d="M340.5 975V977" stroke="#000"/>
<path d="M372.5 975V977" stroke="#000"/>
<path d="M404.5 975V977" stroke="#000"/>
<path d="M436.5 975V977" stroke="#000"/>
<path d="M468.5 975V977" stroke="#000"/>
<path d="M500.5 975V977" stroke="#000"/>
<path d="M532.5 975V977" stroke="#000"/>
<path d="M564.5 975V977" stroke="#000"/>
<path d="M596.5 975V977" stroke="#000"/>
<path d="M628.5 975V977" stroke="#000"/>
<path d="M660.5 975V977" stroke="#000"/>
<path d="M692.5 975V977" stroke="#000"/>
<path d="M724.5 975V977" stroke="#000"/>
<path d="M756.5 975V977" stroke="#000"/>
<path d="M788.5 975V977" stroke="#000"/>
<path d="M820.5 975V977" stroke="#000"/>
<path d="M852.5 975V977" stroke="#000"/>
<path d="M884.5 975V977" stroke="#000"/>
<path d="M916.5 975V977" stroke="#000"/>
<path d="M948.5 975V977" stroke="#000"/>
<path d="M980.5 975V977" stroke="#000"/>
<path d="M1012.5 975V977" stroke="#000"/>
<path d="M1044.5 975V977" stroke="#000"/>
<path d="M1076.5 975V977" stroke="#000"/>
<path d="M1108.5 975V977" stroke="#000"/>
<path d="M1140.5 975V977" stroke="#000"/>
<path d="M1172.5 975V977" stroke="#000"/>
<path d="M1204.5 975V977" stroke="#000"/>
<path d="M1236.5 975V977" stroke="#000"/>
<path d="M1268.5 975V977" stroke="#000"/>
<path d="M1300.5 975V977" stroke="#000"/>
<path d="M1332.5 975V977" stroke="#000"/>
<path d="M1364.5 975V977" stroke="#000"/>
<path d="M1396.5 975V977" stroke="#000"/>
<path d="M1428.5 975V977" stroke="#000"/>
<path d="M1460.5 975V977" stroke="#000"/>
<path d="M1492.5 975V977" stroke="#000"/>
<path d="M1524.5 975V977" stroke="#000"/>
<path d="M1556.5 975V977" stroke="#000"/>
<path d="M1588.5 975V977" stroke="#000"/>
<path d="M1620.5 975V977" stroke="#000"/>
<path d="M1652.5 975V977" stroke="#000"/>
<path d="M1684.5 975V977" stroke="#000"/>
<path d="M1716.5 975V977" stroke="#000"/>
<path d="M1748.5 975V977" stroke="#000"/>
<path d="M1780.5 975V977" stroke="#000"/>
<path d="M1812.5 975V977" stroke="#000"/>
<path d="M1844.5 975V977" stroke="#000"/>
<path d="M1872 690.5H1874" stroke="#000"/>
<path d="M1872 722.5H1874" stroke="#000"/>
<path d="M1872 754.5H1874" stroke="#000"/>
<path d="M1872 786.5H1874" stroke="#000"/>
<path d="M1872 818.5H1874" stroke="#000"/>
<path d="M1872 850.5H1874" stroke="#000"/>
<path d="M1872 882.5H1874" stroke="#000"/>
<path d="M1872 914.5H1874" stroke="#000"/>
</g>
<polyline points="21.2,904.0 37.5,837.2 55.0,822.8 71.2,819.8 88.8,827.0 106.2,827.0 122.5,834.0 140.0,844.5 156.2,849.5 173.8,858.5 191.2,870.8 207.5,875.2 225.0,881.0 241.2,875.8 258.8,864.0 275.8,847.8 292.0,857.8 309.2,850.8 326.2,864.0 343.0,722.8 360.0,702.8 376.8,736.5 393.8,774.5 410.5,777.0 427.5,802.8 444.2,850.2 461.2,861.5 478.2,779.0 495.2,810.2 512.0,799.8 529.5,817.0 546.2,847.8 563.0,853.2 580.2,805.8 597.5,813.5 613.8,814.8 630.8,826.0 648.0,819.8 665.5,826.5 682.0,829.5 699.5,842.8 716.2,849.0 733.2,844.5 750.0,850.2 766.0,855.2 783.8,813.5 800.0,835.2 817.5,831.0 834.5,829.8 852.0,842.0 868.8,844.8 885.0,842.8 902.0,846.0 920.0,855.8 935.2,856.0 953.2,857.8 970.0,818.2 987.0,779.0 1003.8,779.0 1020.8,794.0 1038.0,813.2 1055.0,757.0 1072.5,814.8 1089.5,809.5 1106.2,745.8 1123.0,773.2 1139.5,737.8 1156.8,734.8 1173.8,745.2 1190.0,764.8 1207.5,764.0 1224.5,770.8 1241.2,775.2 1258.2,781.0 1275.0,802.8 1291.2,813.5 1309.5,813.5 1326.2,828.2 1343.2,804.0 1360.0,819.0 1377.5,834.5 1392.7,835.6 1410.9,841.7 1428.4,831.1 1445.2,833.3 1461.6,841.7 1479.8,835.6 1497.6,835.6 1513.6,848.2 1529.9,859.5 1545.9,859.5 1564.2,872.7 1580.2,877.7 1598.0,855.2 1614.0,853.0 1631.7,864.2 1648.6,873.5 1665.5,879.2 1682.3,804.6 1699.8,804.6 1716.9,827.7 1733.8,842.6 1750.7,857.5 1767.6,857.5 1784.4,815.9 1801.3,828.0 1818.7,837.0 1835.6,843.4 1853.9,843.4 1869.4,840.6" fill="none" stroke="#0000a8" stroke-width="2" stroke-linejoin="round"/>
</svg>
<div style="position:absolute;left:21px;top:684px;width:528px;height:10px;background:#ffffff;"></div>
<div style="position:absolute;top:682.1px;height:13px;line-height:13px;font-size:9.6px;color:#0000c0;white-space:pre;left:24.7px;transform-origin:0 50%;transform:scaleX(0.8734);">Balance</div>
<div style="position:absolute;top:682.1px;height:13px;line-height:13px;font-size:9.6px;color:#000;white-space:pre;left:58.8px;transform-origin:0 50%;">/</div>
<div style="position:absolute;top:682.1px;height:13px;line-height:13px;font-size:9.6px;color:#00b000;white-space:pre;left:65.3px;transform-origin:0 50%;transform:scaleX(0.9483);">Equity</div>
<div style="position:absolute;top:682.1px;height:13px;line-height:13px;font-size:9.6px;color:#000;white-space:pre;left:95.0px;transform-origin:0 50%;transform:scaleX(0.9804);">/ Every tick (the most precise method based on all available least timeframes to generate each tick) / 25.00%</div>
<div style="position:absolute;top:919.0px;height:13px;line-height:13px;font-size:9.6px;color:#000;white-space:pre;left:24.5px;transform-origin:0 50%;transform:scaleX(0.9103);">Size</div>
<div style="position:absolute;top:684.5px;height:13px;line-height:13px;font-size:9.6px;color:#000;white-space:pre;left:1876.5px;transform-origin:0 50%;transform:scaleX(0.8866);">657</div>
<div style="position:absolute;top:716.5px;height:13px;line-height:13px;font-size:9.6px;color:#000;white-space:pre;left:1876.5px;transform-origin:0 50%;transform:scaleX(0.8866);">589</div>
<div style="position:absolute;top:748.5px;height:13px;line-height:13px;font-size:9.6px;color:#000;white-space:pre;left:1876.5px;transform-origin:0 50%;transform:scaleX(0.8866);">520</div>
<div style="position:absolute;top:780.5px;height:13px;line-height:13px;font-size:9.6px;color:#000;white-space:pre;left:1876.5px;transform-origin:0 50%;transform:scaleX(0.8866);">452</div>
<div style="position:absolute;top:812.5px;height:13px;line-height:13px;font-size:9.6px;color:#000;white-space:pre;left:1876.5px;transform-origin:0 50%;transform:scaleX(0.8866);">384</div>
<div style="position:absolute;top:844.5px;height:13px;line-height:13px;font-size:9.6px;color:#000;white-space:pre;left:1876.5px;transform-origin:0 50%;transform:scaleX(0.8866);">315</div>
<div style="position:absolute;top:876.5px;height:13px;line-height:13px;font-size:9.6px;color:#000;white-space:pre;left:1876.5px;transform-origin:0 50%;transform:scaleX(0.8866);">247</div>
<div style="position:absolute;top:908.5px;height:13px;line-height:13px;font-size:9.6px;color:#000;white-space:pre;left:1876.5px;transform-origin:0 50%;transform:scaleX(0.8866);">178</div>
<div style="position:absolute;top:975.2px;height:13px;line-height:13px;font-size:9.6px;color:#000;white-space:pre;left:21.3px;transform-origin:0 50%;transform:scaleX(0.8616);">0</div>
<div style="position:absolute;top:975.2px;height:13px;line-height:13px;font-size:9.6px;color:#000;white-space:pre;right:1868.2px;transform-origin:100% 50%;transform:scaleX(0.8710);">2</div>
<div style="position:absolute;top:975.2px;height:13px;line-height:13px;font-size:9.6px;color:#000;white-space:pre;right:1836.2px;transform-origin:100% 50%;transform:scaleX(0.8710);">4</div>
<div style="position:absolute;top:975.2px;height:13px;line-height:13px;font-size:9.6px;color:#000;white-space:pre;right:1804.2px;transform-origin:100% 50%;transform:scaleX(0.8710);">6</div>
<div style="position:absolute;top:975.2px;height:13px;line-height:13px;font-size:9.6px;color:#000;white-space:pre;right:1772.2px;transform-origin:100% 50%;transform:scaleX(0.8710);">8</div>
<div style="position:absolute;top:975.2px;height:13px;line-height:13px;font-size:9.6px;color:#000;white-space:pre;right:1740.2px;transform-origin:100% 50%;transform:scaleX(0.8710);">10</div>
<div style="position:absolute;top:975.2px;height:13px;line-height:13px;font-size:9.6px;color:#000;white-space:pre;right:1708.2px;transform-origin:100% 50%;transform:scaleX(0.8710);">12</div>
<div style="position:absolute;top:975.2px;height:13px;line-height:13px;font-size:9.6px;color:#000;white-space:pre;right:1676.2px;transform-origin:100% 50%;transform:scaleX(0.8710);">13</div>
<div style="position:absolute;top:975.2px;height:13px;line-height:13px;font-size:9.6px;color:#000;white-space:pre;right:1644.2px;transform-origin:100% 50%;transform:scaleX(0.8710);">15</div>
<div style="position:absolute;top:975.2px;height:13px;line-height:13px;font-size:9.6px;color:#000;white-space:pre;right:1612.2px;transform-origin:100% 50%;transform:scaleX(0.8710);">17</div>
<div style="position:absolute;top:975.2px;height:13px;line-height:13px;font-size:9.6px;color:#000;white-space:pre;right:1580.2px;transform-origin:100% 50%;transform:scaleX(0.8710);">19</div>
<div style="position:absolute;top:975.2px;height:13px;line-height:13px;font-size:9.6px;color:#000;white-space:pre;right:1548.2px;transform-origin:100% 50%;transform:scaleX(0.8710);">21</div>
<div style="position:absolute;top:975.2px;height:13px;line-height:13px;font-size:9.6px;color:#000;white-space:pre;right:1516.2px;transform-origin:100% 50%;transform:scaleX(0.8710);">23</div>
<div style="position:absolute;top:975.2px;height:13px;line-height:13px;font-size:9.6px;color:#000;white-space:pre;right:1484.2px;transform-origin:100% 50%;transform:scaleX(0.8710);">25</div>
<div style="position:absolute;top:975.2px;height:13px;line-height:13px;font-size:9.6px;color:#000;white-space:pre;right:1452.2px;transform-origin:100% 50%;transform:scaleX(0.8710);">27</div>
<div style="position:absolute;top:975.2px;height:13px;line-height:13px;font-size:9.6px;color:#000;white-space:pre;right:1420.2px;transform-origin:100% 50%;transform:scaleX(0.8710);">29</div>
<div style="position:absolute;top:975.2px;height:13px;line-height:13px;font-size:9.6px;color:#000;white-space:pre;right:1388.2px;transform-origin:100% 50%;transform:scaleX(0.8710);">30</div>
<div style="position:absolute;top:975.2px;height:13px;line-height:13px;font-size:9.6px;color:#000;white-space:pre;right:1356.2px;transform-origin:100% 50%;transform:scaleX(0.8710);">32</div>
<div style="position:absolute;top:975.2px;height:13px;line-height:13px;font-size:9.6px;color:#000;white-space:pre;right:1324.2px;transform-origin:100% 50%;transform:scaleX(0.8710);">34</div>
<div style="position:absolute;top:975.2px;height:13px;line-height:13px;font-size:9.6px;color:#000;white-space:pre;right:1292.2px;transform-origin:100% 50%;transform:scaleX(0.8710);">36</div>
<div style="position:absolute;top:975.2px;height:13px;line-height:13px;font-size:9.6px;color:#000;white-space:pre;right:1260.2px;transform-origin:100% 50%;transform:scaleX(0.8710);">38</div>
<div style="position:absolute;top:975.2px;height:13px;line-height:13px;font-size:9.6px;color:#000;white-space:pre;right:1228.2px;transform-origin:100% 50%;transform:scaleX(0.8710);">40</div>
<div style="position:absolute;top:975.2px;height:13px;line-height:13px;font-size:9.6px;color:#000;white-space:pre;right:1196.2px;transform-origin:100% 50%;transform:scaleX(0.8710);">42</div>
<div style="position:absolute;top:975.2px;height:13px;line-height:13px;font-size:9.6px;color:#000;white-space:pre;right:1164.2px;transform-origin:100% 50%;transform:scaleX(0.8710);">44</div>
<div style="position:absolute;top:975.2px;height:13px;line-height:13px;font-size:9.6px;color:#000;white-space:pre;right:1132.2px;transform-origin:100% 50%;transform:scaleX(0.8710);">45</div>
<div style="position:absolute;top:975.2px;height:13px;line-height:13px;font-size:9.6px;color:#000;white-space:pre;right:1100.2px;transform-origin:100% 50%;transform:scaleX(0.8710);">47</div>
<div style="position:absolute;top:975.2px;height:13px;line-height:13px;font-size:9.6px;color:#000;white-space:pre;right:1068.2px;transform-origin:100% 50%;transform:scaleX(0.8710);">49</div>
<div style="position:absolute;top:975.2px;height:13px;line-height:13px;font-size:9.6px;color:#000;white-space:pre;right:1036.2px;transform-origin:100% 50%;transform:scaleX(0.8710);">51</div>
<div style="position:absolute;top:975.2px;height:13px;line-height:13px;font-size:9.6px;color:#000;white-space:pre;right:1004.2px;transform-origin:100% 50%;transform:scaleX(0.8710);">53</div>
<div style="position:absolute;top:975.2px;height:13px;line-height:13px;font-size:9.6px;color:#000;white-space:pre;right:972.2px;transform-origin:100% 50%;transform:scaleX(0.8710);">55</div>
<div style="position:absolute;top:975.2px;height:13px;line-height:13px;font-size:9.6px;color:#000;white-space:pre;right:940.2px;transform-origin:100% 50%;transform:scaleX(0.8710);">57</div>
<div style="position:absolute;top:975.2px;height:13px;line-height:13px;font-size:9.6px;color:#000;white-space:pre;right:908.2px;transform-origin:100% 50%;transform:scaleX(0.8710);">59</div>
<div style="position:absolute;top:975.2px;height:13px;line-height:13px;font-size:9.6px;color:#000;white-space:pre;right:876.2px;transform-origin:100% 50%;transform:scaleX(0.8710);">61</div>
<div style="position:absolute;top:975.2px;height:13px;line-height:13px;font-size:9.6px;color:#000;white-space:pre;right:844.2px;transform-origin:100% 50%;transform:scaleX(0.8710);">62</div>
<div style="position:absolute;top:975.2px;height:13px;line-height:13px;font-size:9.6px;color:#000;white-space:pre;right:812.2px;transform-origin:100% 50%;transform:scaleX(0.8710);">64</div>
<div style="position:absolute;top:975.2px;height:13px;line-height:13px;font-size:9.6px;color:#000;white-space:pre;right:780.2px;transform-origin:100% 50%;transform:scaleX(0.8710);">66</div>
<div style="position:absolute;top:975.2px;height:13px;line-height:13px;font-size:9.6px;color:#000;white-space:pre;right:748.2px;transform-origin:100% 50%;transform:scaleX(0.8710);">68</div>
<div style="position:absolute;top:975.2px;height:13px;line-height:13px;font-size:9.6px;color:#000;white-space:pre;right:716.2px;transform-origin:100% 50%;transform:scaleX(0.8710);">70</div>
<div style="position:absolute;top:975.2px;height:13px;line-height:13px;font-size:9.6px;color:#000;white-space:pre;right:684.2px;transform-origin:100% 50%;transform:scaleX(0.8710);">72</div>
<div style="position:absolute;top:975.2px;height:13px;line-height:13px;font-size:9.6px;color:#000;white-space:pre;right:652.2px;transform-origin:100% 50%;transform:scaleX(0.8710);">74</div>
<div style="position:absolute;top:975.2px;height:13px;line-height:13px;font-size:9.6px;color:#000;white-space:pre;right:620.2px;transform-origin:100% 50%;transform:scaleX(0.8710);">76</div>
<div style="position:absolute;top:975.2px;height:13px;line-height:13px;font-size:9.6px;color:#000;white-space:pre;right:588.2px;transform-origin:100% 50%;transform:scaleX(0.8710);">77</div>
<div style="position:absolute;top:975.2px;height:13px;line-height:13px;font-size:9.6px;color:#000;white-space:pre;right:556.2px;transform-origin:100% 50%;transform:scaleX(0.8710);">79</div>
<div style="position:absolute;top:975.2px;height:13px;line-height:13px;font-size:9.6px;color:#000;white-space:pre;right:524.2px;transform-origin:100% 50%;transform:scaleX(0.8710);">81</div>
<div style="position:absolute;top:975.2px;height:13px;line-height:13px;font-size:9.6px;color:#000;white-space:pre;right:492.2px;transform-origin:100% 50%;transform:scaleX(0.8710);">83</div>
<div style="position:absolute;top:975.2px;height:13px;line-height:13px;font-size:9.6px;color:#000;white-space:pre;right:460.2px;transform-origin:100% 50%;transform:scaleX(0.8710);">85</div>
<div style="position:absolute;top:975.2px;height:13px;line-height:13px;font-size:9.6px;color:#000;white-space:pre;right:428.2px;transform-origin:100% 50%;transform:scaleX(0.8710);">87</div>
<div style="position:absolute;top:975.2px;height:13px;line-height:13px;font-size:9.6px;color:#000;white-space:pre;right:396.2px;transform-origin:100% 50%;transform:scaleX(0.8710);">89</div>
<div style="position:absolute;top:975.2px;height:13px;line-height:13px;font-size:9.6px;color:#000;white-space:pre;right:364.2px;transform-origin:100% 50%;transform:scaleX(0.8710);">91</div>
<div style="position:absolute;top:975.2px;height:13px;line-height:13px;font-size:9.6px;color:#000;white-space:pre;right:332.2px;transform-origin:100% 50%;transform:scaleX(0.8710);">93</div>
<div style="position:absolute;top:975.2px;height:13px;line-height:13px;font-size:9.6px;color:#000;white-space:pre;right:300.2px;transform-origin:100% 50%;transform:scaleX(0.8710);">94</div>
<div style="position:absolute;top:975.2px;height:13px;line-height:13px;font-size:9.6px;color:#000;white-space:pre;right:268.2px;transform-origin:100% 50%;transform:scaleX(0.8710);">96</div>
<div style="position:absolute;top:975.2px;height:13px;line-height:13px;font-size:9.6px;color:#000;white-space:pre;right:236.2px;transform-origin:100% 50%;transform:scaleX(0.8710);">98</div>
<div style="position:absolute;top:975.2px;height:13px;line-height:13px;font-size:9.6px;color:#000;white-space:pre;right:204.2px;transform-origin:100% 50%;transform:scaleX(0.8710);">100</div>
<div style="position:absolute;top:975.2px;height:13px;line-height:13px;font-size:9.6px;color:#000;white-space:pre;right:172.2px;transform-origin:100% 50%;transform:scaleX(0.8710);">102</div>
<div style="position:absolute;top:975.2px;height:13px;line-height:13px;font-size:9.6px;color:#000;white-space:pre;right:140.2px;transform-origin:100% 50%;transform:scaleX(0.8710);">104</div>
<div style="position:absolute;top:975.2px;height:13px;line-height:13px;font-size:9.6px;color:#000;white-space:pre;right:108.2px;transform-origin:100% 50%;transform:scaleX(0.8710);">106</div>
<div style="position:absolute;top:975.2px;height:13px;line-height:13px;font-size:9.6px;color:#000;white-space:pre;right:76.2px;transform-origin:100% 50%;transform:scaleX(0.8710);">108</div>
<div style="position:absolute;left:15px;top:991px;width:1901px;height:1px;background:#000;"></div>
<div style="position:absolute;left:137px;top:991px;width:52px;height:20px;background:#ffffff;border:1px solid #000;border-top:none;box-sizing:border-box;"></div>
<div style="position:absolute;top:991.5px;height:18px;line-height:18px;font-size:12.5px;color:#6a6a6a;white-space:pre;left:28.4px;transform-origin:0 50%;transform:scaleX(0.9122);">Settings</div>
<div style="position:absolute;top:991.5px;height:18px;line-height:18px;font-size:12.5px;color:#6a6a6a;white-space:pre;left:90.0px;transform-origin:0 50%;transform:scaleX(0.8877);">Results</div>
<div style="position:absolute;top:991.5px;height:18px;line-height:18px;font-size:12.5px;color:#000;white-space:pre;left:147.7px;transform-origin:0 50%;transform:scaleX(0.8808);">Graph</div>
<div style="position:absolute;top:991.5px;height:18px;line-height:18px;font-size:12.5px;color:#6a6a6a;white-space:pre;left:199.0px;transform-origin:0 50%;transform:scaleX(0.9222);">Report</div>
<div style="position:absolute;top:991.5px;height:18px;line-height:18px;font-size:12.5px;color:#6a6a6a;white-space:pre;left:253.8px;transform-origin:0 50%;transform:scaleX(0.9317);">Journal</div>
<div style="position:absolute;left:80px;top:994px;width:1px;height:14px;background:#555;"></div>
<div style="position:absolute;left:244px;top:994px;width:1px;height:14px;background:#555;"></div>
<div style="position:absolute;left:302px;top:994px;width:1px;height:14px;background:#555;"></div>
</div></body></html>
